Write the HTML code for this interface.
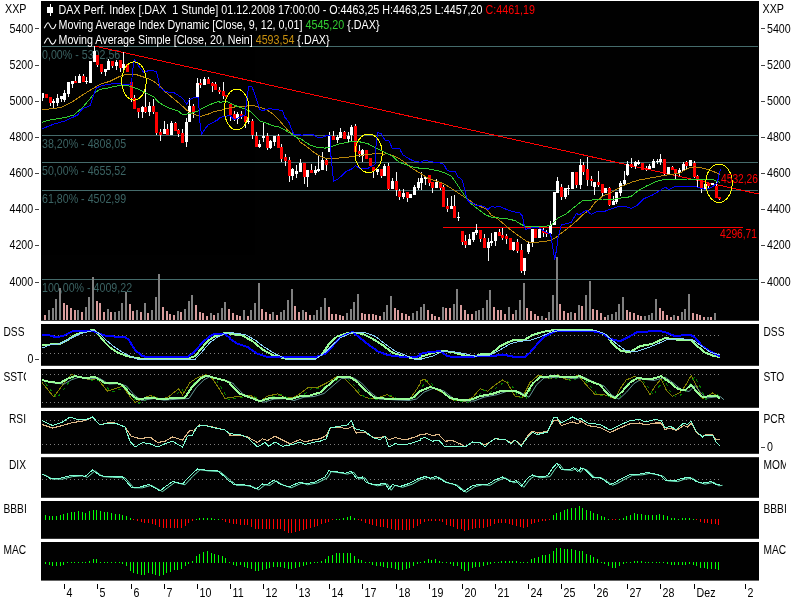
<!DOCTYPE html>
<html><head><meta charset="utf-8"><title>DAX Perf. Index Chart</title>
<style>html,body{margin:0;padding:0;background:#fff;overflow:hidden}svg{display:block;will-change:transform;opacity:.999}text{font-family:"Liberation Sans",Arial,sans-serif;font-size:12.3px}.ax{fill:#000}.lg{fill:#fff}.fib{fill:#3b6363}.rd{fill:#f00}</style></head><body>
<svg width="800" height="600" viewBox="0 0 800 600">
<rect width="800" height="600" fill="#fff"/>
<rect x="41" y="1" width="718" height="319.8" fill="#000"/>
<rect x="41" y="324" width="718" height="41.80000000000001" fill="#000"/>
<rect x="41" y="369" width="718" height="38.80000000000001" fill="#000"/>
<rect x="41" y="411" width="718" height="42.80000000000001" fill="#000"/>
<rect x="41" y="457.2" width="718" height="40.60000000000002" fill="#000"/>
<rect x="41" y="501" width="718" height="37.799999999999955" fill="#000"/>
<rect x="41" y="542" width="718" height="38.60000000000002" fill="#000"/>
<defs><clipPath id="cm"><rect x="42" y="1" width="717" height="319.8"/></clipPath><clipPath id="cl"><rect x="0" y="0" width="25.9" height="600"/></clipPath><clipPath id="cr"><rect x="760" y="0" width="26" height="600"/></clipPath></defs>
<rect x="42" y="46.0" width="716" height="1" fill="#456b6b"/>
<text class="fib" transform="translate(42 58.5) scale(0.868 1)">0,00% - 5302,56</text>
<rect x="42" y="135.0" width="716" height="1" fill="#456b6b"/>
<text class="fib" transform="translate(42 147.5) scale(0.868 1)">38,20% - 4808,05</text>
<rect x="42" y="162.0" width="716" height="1" fill="#456b6b"/>
<text class="fib" transform="translate(42 174.5) scale(0.868 1)">50,00% - 4655,52</text>
<rect x="42" y="190.0" width="716" height="1" fill="#456b6b"/>
<text class="fib" transform="translate(42 202.5) scale(0.868 1)">61,80% - 4502,99</text>
<rect x="42" y="279.0" width="716" height="1" fill="#456b6b"/>
<text class="fib" transform="translate(42 291.5) scale(0.868 1)">100,00% - 4009,22</text>
<g shape-rendering="crispEdges">
<rect x="44" y="315" width="2" height="5" fill="#d89c9c"/>
<rect x="48" y="310" width="2" height="10" fill="#808080"/>
<rect x="52" y="308" width="2" height="12" fill="#808080"/>
<rect x="55" y="299" width="2" height="21" fill="#808080"/>
<rect x="59" y="288" width="2" height="32" fill="#808080"/>
<rect x="63" y="303" width="2" height="17" fill="#d89c9c"/>
<rect x="66" y="305" width="2" height="15" fill="#d89c9c"/>
<rect x="70" y="308" width="2" height="12" fill="#d89c9c"/>
<rect x="74" y="310" width="2" height="10" fill="#d89c9c"/>
<rect x="77" y="310" width="2" height="10" fill="#808080"/>
<rect x="81" y="312" width="2" height="8" fill="#d89c9c"/>
<rect x="85" y="307" width="2" height="13" fill="#808080"/>
<rect x="88" y="297" width="2" height="23" fill="#808080"/>
<rect x="92" y="277" width="2" height="43" fill="#808080"/>
<rect x="96" y="301" width="2" height="19" fill="#d89c9c"/>
<rect x="99" y="303" width="2" height="17" fill="#d89c9c"/>
<rect x="103" y="312" width="2" height="8" fill="#d89c9c"/>
<rect x="107" y="309" width="2" height="11" fill="#808080"/>
<rect x="110" y="312" width="2" height="8" fill="#d89c9c"/>
<rect x="114" y="312" width="2" height="8" fill="#808080"/>
<rect x="118" y="311" width="2" height="9" fill="#808080"/>
<rect x="121" y="303" width="2" height="17" fill="#808080"/>
<rect x="125" y="292" width="2" height="28" fill="#808080"/>
<rect x="129" y="304" width="2" height="16" fill="#d89c9c"/>
<rect x="132" y="311" width="2" height="9" fill="#d89c9c"/>
<rect x="136" y="310" width="2" height="10" fill="#808080"/>
<rect x="140" y="312" width="2" height="8" fill="#d89c9c"/>
<rect x="144" y="303" width="2" height="17" fill="#808080"/>
<rect x="147" y="313" width="2" height="7" fill="#d89c9c"/>
<rect x="151" y="310" width="2" height="10" fill="#808080"/>
<rect x="155" y="297" width="2" height="23" fill="#808080"/>
<rect x="158" y="274" width="2" height="46" fill="#808080"/>
<rect x="162" y="307" width="2" height="13" fill="#d89c9c"/>
<rect x="166" y="311" width="2" height="9" fill="#d89c9c"/>
<rect x="169" y="314" width="2" height="6" fill="#d89c9c"/>
<rect x="173" y="315" width="2" height="5" fill="#d89c9c"/>
<rect x="177" y="311" width="2" height="9" fill="#808080"/>
<rect x="180" y="312" width="2" height="8" fill="#d89c9c"/>
<rect x="184" y="309" width="2" height="11" fill="#808080"/>
<rect x="188" y="301" width="2" height="19" fill="#808080"/>
<rect x="191" y="295" width="2" height="25" fill="#808080"/>
<rect x="195" y="305" width="2" height="15" fill="#d89c9c"/>
<rect x="199" y="312" width="2" height="8" fill="#d89c9c"/>
<rect x="202" y="313" width="2" height="7" fill="#d89c9c"/>
<rect x="206" y="316" width="2" height="4" fill="#d89c9c"/>
<rect x="210" y="313" width="2" height="7" fill="#808080"/>
<rect x="213" y="315" width="2" height="5" fill="#d89c9c"/>
<rect x="217" y="313" width="2" height="7" fill="#808080"/>
<rect x="221" y="308" width="2" height="12" fill="#808080"/>
<rect x="224" y="302" width="2" height="18" fill="#808080"/>
<rect x="228" y="309" width="2" height="11" fill="#d89c9c"/>
<rect x="232" y="313" width="2" height="7" fill="#d89c9c"/>
<rect x="236" y="315" width="2" height="5" fill="#d89c9c"/>
<rect x="239" y="316" width="2" height="4" fill="#d89c9c"/>
<rect x="243" y="310" width="2" height="10" fill="#808080"/>
<rect x="247" y="316" width="2" height="4" fill="#d89c9c"/>
<rect x="250" y="310" width="2" height="10" fill="#808080"/>
<rect x="254" y="303" width="2" height="17" fill="#808080"/>
<rect x="258" y="283" width="2" height="37" fill="#808080"/>
<rect x="261" y="309" width="2" height="11" fill="#d89c9c"/>
<rect x="265" y="312" width="2" height="8" fill="#d89c9c"/>
<rect x="269" y="314" width="2" height="6" fill="#d89c9c"/>
<rect x="272" y="312" width="2" height="8" fill="#808080"/>
<rect x="276" y="315" width="2" height="5" fill="#d89c9c"/>
<rect x="280" y="312" width="2" height="8" fill="#808080"/>
<rect x="283" y="310" width="2" height="10" fill="#808080"/>
<rect x="287" y="300" width="2" height="20" fill="#808080"/>
<rect x="291" y="289" width="2" height="31" fill="#808080"/>
<rect x="294" y="306" width="2" height="14" fill="#d89c9c"/>
<rect x="298" y="312" width="2" height="8" fill="#d89c9c"/>
<rect x="302" y="310" width="2" height="10" fill="#808080"/>
<rect x="305" y="312" width="2" height="8" fill="#d89c9c"/>
<rect x="309" y="315" width="2" height="5" fill="#d89c9c"/>
<rect x="313" y="315" width="2" height="5" fill="#808080"/>
<rect x="316" y="310" width="2" height="10" fill="#808080"/>
<rect x="320" y="307" width="2" height="13" fill="#808080"/>
<rect x="324" y="298" width="2" height="22" fill="#808080"/>
<rect x="328" y="307" width="2" height="13" fill="#d89c9c"/>
<rect x="331" y="314" width="2" height="6" fill="#d89c9c"/>
<rect x="335" y="314" width="2" height="6" fill="#d89c9c"/>
<rect x="339" y="315" width="2" height="5" fill="#d89c9c"/>
<rect x="342" y="316" width="2" height="4" fill="#d89c9c"/>
<rect x="346" y="313" width="2" height="7" fill="#808080"/>
<rect x="350" y="309" width="2" height="11" fill="#808080"/>
<rect x="353" y="302" width="2" height="18" fill="#808080"/>
<rect x="357" y="294" width="2" height="26" fill="#808080"/>
<rect x="361" y="313" width="2" height="7" fill="#d89c9c"/>
<rect x="364" y="314" width="2" height="6" fill="#d89c9c"/>
<rect x="368" y="314" width="2" height="6" fill="#d89c9c"/>
<rect x="372" y="314" width="2" height="6" fill="#d89c9c"/>
<rect x="375" y="315" width="2" height="5" fill="#d89c9c"/>
<rect x="379" y="316" width="2" height="4" fill="#d89c9c"/>
<rect x="383" y="312" width="2" height="8" fill="#808080"/>
<rect x="386" y="305" width="2" height="15" fill="#808080"/>
<rect x="390" y="296" width="2" height="24" fill="#808080"/>
<rect x="394" y="308" width="2" height="12" fill="#d89c9c"/>
<rect x="397" y="310" width="2" height="10" fill="#d89c9c"/>
<rect x="401" y="313" width="2" height="7" fill="#d89c9c"/>
<rect x="405" y="314" width="2" height="6" fill="#d89c9c"/>
<rect x="408" y="316" width="2" height="4" fill="#d89c9c"/>
<rect x="412" y="313" width="2" height="7" fill="#808080"/>
<rect x="416" y="311" width="2" height="9" fill="#808080"/>
<rect x="420" y="307" width="2" height="13" fill="#808080"/>
<rect x="423" y="304" width="2" height="16" fill="#808080"/>
<rect x="427" y="310" width="2" height="10" fill="#d89c9c"/>
<rect x="431" y="314" width="2" height="6" fill="#d89c9c"/>
<rect x="434" y="316" width="2" height="4" fill="#d89c9c"/>
<rect x="438" y="317" width="2" height="3" fill="#d89c9c"/>
<rect x="442" y="307" width="2" height="13" fill="#808080"/>
<rect x="445" y="308" width="2" height="12" fill="#d89c9c"/>
<rect x="449" y="308" width="2" height="12" fill="#d89c9c"/>
<rect x="453" y="304" width="2" height="16" fill="#808080"/>
<rect x="456" y="289" width="2" height="31" fill="#808080"/>
<rect x="460" y="305" width="2" height="15" fill="#d89c9c"/>
<rect x="464" y="310" width="2" height="10" fill="#d89c9c"/>
<rect x="467" y="314" width="2" height="6" fill="#d89c9c"/>
<rect x="471" y="314" width="2" height="6" fill="#d89c9c"/>
<rect x="475" y="311" width="2" height="9" fill="#808080"/>
<rect x="478" y="310" width="2" height="10" fill="#808080"/>
<rect x="482" y="308" width="2" height="12" fill="#808080"/>
<rect x="486" y="300" width="2" height="20" fill="#808080"/>
<rect x="489" y="290" width="2" height="30" fill="#808080"/>
<rect x="493" y="307" width="2" height="13" fill="#d89c9c"/>
<rect x="497" y="310" width="2" height="10" fill="#d89c9c"/>
<rect x="500" y="310" width="2" height="10" fill="#d89c9c"/>
<rect x="504" y="314" width="2" height="6" fill="#d89c9c"/>
<rect x="508" y="307" width="2" height="13" fill="#808080"/>
<rect x="512" y="314" width="2" height="6" fill="#d89c9c"/>
<rect x="515" y="310" width="2" height="10" fill="#808080"/>
<rect x="519" y="300" width="2" height="20" fill="#808080"/>
<rect x="523" y="283" width="2" height="37" fill="#808080"/>
<rect x="526" y="308" width="2" height="12" fill="#d89c9c"/>
<rect x="530" y="311" width="2" height="9" fill="#d89c9c"/>
<rect x="534" y="314" width="2" height="6" fill="#d89c9c"/>
<rect x="537" y="316" width="2" height="4" fill="#d89c9c"/>
<rect x="541" y="316" width="2" height="4" fill="#808080"/>
<rect x="545" y="318" width="2" height="2" fill="#d89c9c"/>
<rect x="548" y="312" width="2" height="8" fill="#808080"/>
<rect x="552" y="295" width="2" height="25" fill="#808080"/>
<rect x="556" y="257" width="2" height="63" fill="#808080"/>
<rect x="559" y="304" width="2" height="16" fill="#d89c9c"/>
<rect x="563" y="311" width="2" height="9" fill="#d89c9c"/>
<rect x="567" y="313" width="2" height="7" fill="#d89c9c"/>
<rect x="570" y="312" width="2" height="8" fill="#808080"/>
<rect x="574" y="313" width="2" height="7" fill="#d89c9c"/>
<rect x="578" y="305" width="2" height="15" fill="#808080"/>
<rect x="581" y="306" width="2" height="14" fill="#d89c9c"/>
<rect x="585" y="295" width="2" height="25" fill="#808080"/>
<rect x="589" y="281" width="2" height="39" fill="#808080"/>
<rect x="592" y="309" width="2" height="11" fill="#d89c9c"/>
<rect x="596" y="310" width="2" height="10" fill="#d89c9c"/>
<rect x="600" y="313" width="2" height="7" fill="#d89c9c"/>
<rect x="604" y="317" width="2" height="3" fill="#d89c9c"/>
<rect x="607" y="315" width="2" height="5" fill="#808080"/>
<rect x="611" y="314" width="2" height="6" fill="#808080"/>
<rect x="615" y="312" width="2" height="8" fill="#808080"/>
<rect x="618" y="304" width="2" height="16" fill="#808080"/>
<rect x="622" y="297" width="2" height="23" fill="#808080"/>
<rect x="626" y="310" width="2" height="10" fill="#d89c9c"/>
<rect x="629" y="312" width="2" height="8" fill="#d89c9c"/>
<rect x="633" y="313" width="2" height="7" fill="#d89c9c"/>
<rect x="637" y="315" width="2" height="5" fill="#d89c9c"/>
<rect x="640" y="316" width="2" height="4" fill="#d89c9c"/>
<rect x="644" y="316" width="2" height="4" fill="#808080"/>
<rect x="648" y="315" width="2" height="5" fill="#808080"/>
<rect x="651" y="313" width="2" height="7" fill="#808080"/>
<rect x="655" y="299" width="2" height="21" fill="#808080"/>
<rect x="659" y="308" width="2" height="12" fill="#d89c9c"/>
<rect x="662" y="311" width="2" height="9" fill="#d89c9c"/>
<rect x="666" y="315" width="2" height="5" fill="#d89c9c"/>
<rect x="670" y="317" width="2" height="3" fill="#d89c9c"/>
<rect x="673" y="315" width="2" height="5" fill="#808080"/>
<rect x="677" y="316" width="2" height="4" fill="#d89c9c"/>
<rect x="681" y="312" width="2" height="8" fill="#808080"/>
<rect x="684" y="309" width="2" height="11" fill="#808080"/>
<rect x="688" y="294" width="2" height="26" fill="#808080"/>
<rect x="692" y="313" width="2" height="7" fill="#d89c9c"/>
<rect x="696" y="314" width="2" height="6" fill="#d89c9c"/>
<rect x="699" y="315" width="2" height="5" fill="#d89c9c"/>
<rect x="703" y="317" width="2" height="3" fill="#d89c9c"/>
<rect x="707" y="317" width="2" height="3" fill="#808080"/>
<rect x="710" y="317" width="2" height="3" fill="#d89c9c"/>
<rect x="714" y="313" width="2" height="7" fill="#808080"/>
</g>
<g clip-path="url(#cm)">
<line x1="94.4" y1="46.0" x2="758.5" y2="194.0" stroke="#f00" stroke-width="1" shape-rendering="crispEdges"/>
<line x1="443" y1="227.5" x2="742.5" y2="227.5" stroke="#f00" stroke-width="1" shape-rendering="crispEdges"/>
<g shape-rendering="crispEdges">
<rect x="42" y="93" width="1" height="8" fill="#f4f4f4"/>
<rect x="41" y="93" width="3" height="5" fill="#fff"/>
<rect x="46" y="94" width="1" height="4" fill="#f4f4f4"/>
<rect x="45" y="94" width="3" height="4" fill="#f00"/>
<rect x="50" y="97" width="1" height="9" fill="#f4f4f4"/>
<rect x="49" y="97" width="3" height="6" fill="#f00"/>
<rect x="53" y="99" width="1" height="9" fill="#f4f4f4"/>
<rect x="52" y="101" width="3" height="2" fill="#fff"/>
<rect x="57" y="94" width="1" height="12" fill="#f4f4f4"/>
<rect x="56" y="98" width="3" height="5" fill="#fff"/>
<rect x="61" y="96" width="1" height="6" fill="#f4f4f4"/>
<rect x="60" y="96" width="3" height="3" fill="#fff"/>
<rect x="64" y="90" width="1" height="12" fill="#f4f4f4"/>
<rect x="63" y="93" width="3" height="7" fill="#fff"/>
<rect x="68" y="82" width="1" height="15" fill="#f4f4f4"/>
<rect x="67" y="82" width="3" height="12" fill="#fff"/>
<rect x="72" y="81" width="1" height="7" fill="#f4f4f4"/>
<rect x="71" y="81" width="3" height="3" fill="#fff"/>
<rect x="75" y="76" width="1" height="7" fill="#f4f4f4"/>
<rect x="74" y="81" width="3" height="2" fill="#f00"/>
<rect x="79" y="74" width="1" height="9" fill="#f4f4f4"/>
<rect x="78" y="76" width="3" height="7" fill="#fff"/>
<rect x="83" y="74" width="1" height="8" fill="#f4f4f4"/>
<rect x="82" y="76" width="3" height="6" fill="#f00"/>
<rect x="86" y="77" width="1" height="7" fill="#f4f4f4"/>
<rect x="85" y="81" width="3" height="1" fill="#fff"/>
<rect x="90" y="61" width="1" height="22" fill="#f4f4f4"/>
<rect x="89" y="61" width="3" height="22" fill="#fff"/>
<rect x="94" y="46" width="1" height="16" fill="#f4f4f4"/>
<rect x="93" y="51" width="3" height="11" fill="#fff"/>
<rect x="97" y="55" width="1" height="12" fill="#f4f4f4"/>
<rect x="96" y="55" width="3" height="10" fill="#f00"/>
<rect x="101" y="64" width="1" height="10" fill="#f4f4f4"/>
<rect x="100" y="64" width="3" height="8" fill="#f00"/>
<rect x="105" y="69" width="1" height="7" fill="#f4f4f4"/>
<rect x="104" y="69" width="3" height="3" fill="#fff"/>
<rect x="108" y="59" width="1" height="11" fill="#f4f4f4"/>
<rect x="107" y="61" width="3" height="9" fill="#fff"/>
<rect x="112" y="61" width="1" height="7" fill="#f4f4f4"/>
<rect x="111" y="61" width="3" height="5" fill="#f00"/>
<rect x="116" y="60" width="1" height="10" fill="#f4f4f4"/>
<rect x="115" y="62" width="3" height="4" fill="#fff"/>
<rect x="120" y="60" width="1" height="12" fill="#f4f4f4"/>
<rect x="119" y="60" width="3" height="8" fill="#f00"/>
<rect x="123" y="52" width="1" height="19" fill="#f4f4f4"/>
<rect x="122" y="64" width="3" height="4" fill="#fff"/>
<rect x="127" y="64" width="1" height="8" fill="#f4f4f4"/>
<rect x="126" y="64" width="3" height="8" fill="#f00"/>
<rect x="131" y="82" width="1" height="20" fill="#f4f4f4"/>
<rect x="130" y="82" width="3" height="16" fill="#f00"/>
<rect x="134" y="95" width="1" height="14" fill="#f4f4f4"/>
<rect x="133" y="98" width="3" height="11" fill="#f00"/>
<rect x="138" y="108" width="1" height="10" fill="#f4f4f4"/>
<rect x="137" y="108" width="3" height="4" fill="#f00"/>
<rect x="142" y="106" width="1" height="12" fill="#f4f4f4"/>
<rect x="141" y="107" width="3" height="5" fill="#fff"/>
<rect x="145" y="88" width="1" height="25" fill="#f4f4f4"/>
<rect x="144" y="107" width="3" height="5" fill="#f00"/>
<rect x="149" y="102" width="1" height="14" fill="#f4f4f4"/>
<rect x="148" y="106" width="3" height="6" fill="#fff"/>
<rect x="153" y="99" width="1" height="15" fill="#f4f4f4"/>
<rect x="152" y="106" width="3" height="6" fill="#f00"/>
<rect x="156" y="112" width="1" height="23" fill="#f4f4f4"/>
<rect x="155" y="112" width="3" height="21" fill="#f00"/>
<rect x="160" y="129" width="1" height="12" fill="#f4f4f4"/>
<rect x="159" y="132" width="3" height="3" fill="#f00"/>
<rect x="164" y="121" width="1" height="13" fill="#f4f4f4"/>
<rect x="163" y="129" width="3" height="5" fill="#fff"/>
<rect x="167" y="124" width="1" height="11" fill="#f4f4f4"/>
<rect x="166" y="129" width="3" height="6" fill="#f00"/>
<rect x="171" y="121" width="1" height="14" fill="#f4f4f4"/>
<rect x="170" y="123" width="3" height="12" fill="#fff"/>
<rect x="175" y="122" width="1" height="9" fill="#f4f4f4"/>
<rect x="174" y="123" width="3" height="8" fill="#f00"/>
<rect x="178" y="129" width="1" height="8" fill="#f4f4f4"/>
<rect x="177" y="130" width="3" height="4" fill="#f00"/>
<rect x="182" y="129" width="1" height="14" fill="#f4f4f4"/>
<rect x="181" y="133" width="3" height="10" fill="#f00"/>
<rect x="186" y="118" width="1" height="29" fill="#f4f4f4"/>
<rect x="185" y="122" width="3" height="20" fill="#fff"/>
<rect x="189" y="98" width="1" height="24" fill="#f4f4f4"/>
<rect x="188" y="106" width="3" height="16" fill="#fff"/>
<rect x="193" y="104" width="1" height="14" fill="#f4f4f4"/>
<rect x="192" y="106" width="3" height="7" fill="#f00"/>
<rect x="197" y="78" width="1" height="20" fill="#f4f4f4"/>
<rect x="196" y="83" width="3" height="15" fill="#fff"/>
<rect x="200" y="79" width="1" height="9" fill="#f4f4f4"/>
<rect x="199" y="83" width="3" height="2" fill="#f00"/>
<rect x="204" y="77" width="1" height="8" fill="#f4f4f4"/>
<rect x="203" y="79" width="3" height="6" fill="#fff"/>
<rect x="208" y="77" width="1" height="7" fill="#f4f4f4"/>
<rect x="207" y="79" width="3" height="5" fill="#f00"/>
<rect x="212" y="82" width="1" height="10" fill="#f4f4f4"/>
<rect x="211" y="83" width="3" height="3" fill="#f00"/>
<rect x="215" y="82" width="1" height="8" fill="#f4f4f4"/>
<rect x="214" y="84" width="3" height="6" fill="#f00"/>
<rect x="219" y="87" width="1" height="7" fill="#f4f4f4"/>
<rect x="218" y="90" width="3" height="2" fill="#f00"/>
<rect x="223" y="82" width="1" height="17" fill="#f4f4f4"/>
<rect x="222" y="91" width="3" height="5" fill="#f00"/>
<rect x="226" y="95" width="1" height="2" fill="#f4f4f4"/>
<rect x="225" y="95" width="3" height="2" fill="#f00"/>
<rect x="230" y="104" width="1" height="17" fill="#f4f4f4"/>
<rect x="229" y="104" width="3" height="11" fill="#f00"/>
<rect x="234" y="111" width="1" height="10" fill="#f4f4f4"/>
<rect x="233" y="114" width="3" height="5" fill="#f00"/>
<rect x="237" y="112" width="1" height="12" fill="#f4f4f4"/>
<rect x="236" y="114" width="3" height="5" fill="#fff"/>
<rect x="241" y="111" width="1" height="8" fill="#f4f4f4"/>
<rect x="240" y="114" width="3" height="3" fill="#f00"/>
<rect x="245" y="116" width="1" height="12" fill="#f4f4f4"/>
<rect x="244" y="116" width="3" height="6" fill="#f00"/>
<rect x="248" y="117" width="1" height="7" fill="#f4f4f4"/>
<rect x="247" y="121" width="3" height="1" fill="#fff"/>
<rect x="252" y="119" width="1" height="20" fill="#f4f4f4"/>
<rect x="251" y="121" width="3" height="14" fill="#f00"/>
<rect x="256" y="132" width="1" height="15" fill="#f4f4f4"/>
<rect x="255" y="136" width="3" height="11" fill="#f00"/>
<rect x="259" y="140" width="1" height="8" fill="#f4f4f4"/>
<rect x="258" y="144" width="3" height="3" fill="#fff"/>
<rect x="263" y="123" width="1" height="19" fill="#f4f4f4"/>
<rect x="262" y="136" width="3" height="2" fill="#fff"/>
<rect x="267" y="133" width="1" height="17" fill="#f4f4f4"/>
<rect x="266" y="136" width="3" height="12" fill="#f00"/>
<rect x="270" y="140" width="1" height="9" fill="#f4f4f4"/>
<rect x="269" y="141" width="3" height="7" fill="#fff"/>
<rect x="274" y="136" width="1" height="10" fill="#f4f4f4"/>
<rect x="273" y="136" width="3" height="6" fill="#fff"/>
<rect x="278" y="134" width="1" height="14" fill="#f4f4f4"/>
<rect x="277" y="136" width="3" height="12" fill="#f00"/>
<rect x="281" y="144" width="1" height="18" fill="#f4f4f4"/>
<rect x="280" y="147" width="3" height="12" fill="#f00"/>
<rect x="285" y="154" width="1" height="12" fill="#f4f4f4"/>
<rect x="284" y="157" width="3" height="4" fill="#f00"/>
<rect x="289" y="157" width="1" height="25" fill="#f4f4f4"/>
<rect x="288" y="160" width="3" height="16" fill="#f00"/>
<rect x="292" y="168" width="1" height="12" fill="#f4f4f4"/>
<rect x="291" y="169" width="3" height="7" fill="#fff"/>
<rect x="296" y="165" width="1" height="13" fill="#f4f4f4"/>
<rect x="295" y="171" width="3" height="3" fill="#fff"/>
<rect x="300" y="159" width="1" height="13" fill="#f4f4f4"/>
<rect x="299" y="163" width="3" height="9" fill="#fff"/>
<rect x="304" y="163" width="1" height="21" fill="#f4f4f4"/>
<rect x="303" y="163" width="3" height="14" fill="#f00"/>
<rect x="307" y="170" width="1" height="17" fill="#f4f4f4"/>
<rect x="306" y="170" width="3" height="7" fill="#fff"/>
<rect x="311" y="164" width="1" height="9" fill="#f4f4f4"/>
<rect x="310" y="170" width="3" height="3" fill="#f00"/>
<rect x="315" y="166" width="1" height="9" fill="#f4f4f4"/>
<rect x="314" y="170" width="3" height="3" fill="#fff"/>
<rect x="318" y="156" width="1" height="16" fill="#f4f4f4"/>
<rect x="317" y="169" width="3" height="2" fill="#fff"/>
<rect x="322" y="152" width="1" height="18" fill="#f4f4f4"/>
<rect x="321" y="160" width="3" height="10" fill="#fff"/>
<rect x="326" y="158" width="1" height="13" fill="#f4f4f4"/>
<rect x="325" y="160" width="3" height="5" fill="#f00"/>
<rect x="329" y="132" width="1" height="20" fill="#f4f4f4"/>
<rect x="328" y="136" width="3" height="16" fill="#fff"/>
<rect x="333" y="131" width="1" height="9" fill="#f4f4f4"/>
<rect x="332" y="136" width="3" height="4" fill="#f00"/>
<rect x="337" y="135" width="1" height="8" fill="#f4f4f4"/>
<rect x="336" y="137" width="3" height="3" fill="#fff"/>
<rect x="340" y="128" width="1" height="10" fill="#f4f4f4"/>
<rect x="339" y="132" width="3" height="6" fill="#fff"/>
<rect x="344" y="131" width="1" height="8" fill="#f4f4f4"/>
<rect x="343" y="132" width="3" height="7" fill="#f00"/>
<rect x="348" y="132" width="1" height="11" fill="#f4f4f4"/>
<rect x="347" y="136" width="3" height="3" fill="#fff"/>
<rect x="351" y="125" width="1" height="16" fill="#f4f4f4"/>
<rect x="350" y="127" width="3" height="8" fill="#fff"/>
<rect x="355" y="124" width="1" height="28" fill="#f4f4f4"/>
<rect x="354" y="126" width="3" height="26" fill="#f00"/>
<rect x="359" y="145" width="1" height="12" fill="#f4f4f4"/>
<rect x="358" y="151" width="3" height="3" fill="#f00"/>
<rect x="362" y="149" width="1" height="13" fill="#f4f4f4"/>
<rect x="361" y="150" width="3" height="6" fill="#fff"/>
<rect x="366" y="150" width="1" height="9" fill="#f4f4f4"/>
<rect x="365" y="150" width="3" height="9" fill="#f00"/>
<rect x="370" y="158" width="1" height="8" fill="#f4f4f4"/>
<rect x="369" y="158" width="3" height="8" fill="#f00"/>
<rect x="373" y="167" width="1" height="11" fill="#f4f4f4"/>
<rect x="372" y="167" width="3" height="4" fill="#f00"/>
<rect x="377" y="169" width="1" height="6" fill="#f4f4f4"/>
<rect x="376" y="169" width="3" height="3" fill="#fff"/>
<rect x="381" y="169" width="1" height="9" fill="#f4f4f4"/>
<rect x="380" y="169" width="3" height="7" fill="#f00"/>
<rect x="384" y="164" width="1" height="12" fill="#f4f4f4"/>
<rect x="383" y="166" width="3" height="10" fill="#fff"/>
<rect x="388" y="163" width="1" height="27" fill="#f4f4f4"/>
<rect x="387" y="166" width="3" height="23" fill="#f00"/>
<rect x="392" y="178" width="1" height="11" fill="#f4f4f4"/>
<rect x="391" y="181" width="3" height="8" fill="#fff"/>
<rect x="396" y="172" width="1" height="24" fill="#f4f4f4"/>
<rect x="395" y="181" width="3" height="9" fill="#f00"/>
<rect x="399" y="189" width="1" height="11" fill="#f4f4f4"/>
<rect x="398" y="191" width="3" height="6" fill="#f00"/>
<rect x="403" y="189" width="1" height="10" fill="#f4f4f4"/>
<rect x="402" y="193" width="3" height="4" fill="#fff"/>
<rect x="407" y="192" width="1" height="10" fill="#f4f4f4"/>
<rect x="406" y="192" width="3" height="6" fill="#f00"/>
<rect x="410" y="194" width="1" height="4" fill="#f4f4f4"/>
<rect x="409" y="194" width="3" height="4" fill="#fff"/>
<rect x="414" y="185" width="1" height="10" fill="#f4f4f4"/>
<rect x="413" y="187" width="3" height="8" fill="#fff"/>
<rect x="418" y="178" width="1" height="12" fill="#f4f4f4"/>
<rect x="417" y="182" width="3" height="6" fill="#fff"/>
<rect x="421" y="172" width="1" height="18" fill="#f4f4f4"/>
<rect x="420" y="178" width="3" height="5" fill="#fff"/>
<rect x="425" y="176" width="1" height="9" fill="#f4f4f4"/>
<rect x="424" y="177" width="3" height="2" fill="#fff"/>
<rect x="429" y="175" width="1" height="11" fill="#f4f4f4"/>
<rect x="428" y="175" width="3" height="8" fill="#f00"/>
<rect x="432" y="182" width="1" height="11" fill="#f4f4f4"/>
<rect x="431" y="182" width="3" height="6" fill="#f00"/>
<rect x="436" y="179" width="1" height="9" fill="#f4f4f4"/>
<rect x="435" y="182" width="3" height="6" fill="#fff"/>
<rect x="440" y="183" width="1" height="7" fill="#f4f4f4"/>
<rect x="439" y="183" width="3" height="5" fill="#f00"/>
<rect x="443" y="185" width="1" height="22" fill="#f4f4f4"/>
<rect x="442" y="187" width="3" height="20" fill="#f00"/>
<rect x="447" y="198" width="1" height="14" fill="#f4f4f4"/>
<rect x="446" y="206" width="3" height="3" fill="#f00"/>
<rect x="451" y="196" width="1" height="13" fill="#f4f4f4"/>
<rect x="450" y="206" width="3" height="3" fill="#fff"/>
<rect x="454" y="195" width="1" height="23" fill="#f4f4f4"/>
<rect x="453" y="206" width="3" height="12" fill="#f00"/>
<rect x="458" y="212" width="1" height="9" fill="#f4f4f4"/>
<rect x="457" y="217" width="3" height="1" fill="#fff"/>
<rect x="462" y="231" width="1" height="14" fill="#f4f4f4"/>
<rect x="461" y="231" width="3" height="11" fill="#f00"/>
<rect x="465" y="235" width="1" height="13" fill="#f4f4f4"/>
<rect x="464" y="241" width="3" height="4" fill="#f00"/>
<rect x="469" y="234" width="1" height="11" fill="#f4f4f4"/>
<rect x="468" y="239" width="3" height="6" fill="#fff"/>
<rect x="473" y="232" width="1" height="10" fill="#f4f4f4"/>
<rect x="472" y="232" width="3" height="8" fill="#fff"/>
<rect x="476" y="224" width="1" height="11" fill="#f4f4f4"/>
<rect x="475" y="230" width="3" height="3" fill="#fff"/>
<rect x="480" y="230" width="1" height="12" fill="#f4f4f4"/>
<rect x="479" y="230" width="3" height="9" fill="#f00"/>
<rect x="484" y="234" width="1" height="14" fill="#f4f4f4"/>
<rect x="483" y="238" width="3" height="10" fill="#f00"/>
<rect x="488" y="238" width="1" height="23" fill="#f4f4f4"/>
<rect x="487" y="242" width="3" height="6" fill="#fff"/>
<rect x="491" y="233" width="1" height="13" fill="#f4f4f4"/>
<rect x="490" y="241" width="3" height="2" fill="#fff"/>
<rect x="495" y="232" width="1" height="14" fill="#f4f4f4"/>
<rect x="494" y="232" width="3" height="9" fill="#fff"/>
<rect x="499" y="229" width="1" height="7" fill="#f4f4f4"/>
<rect x="498" y="232" width="3" height="4" fill="#f00"/>
<rect x="502" y="228" width="1" height="12" fill="#f4f4f4"/>
<rect x="501" y="235" width="3" height="3" fill="#f00"/>
<rect x="506" y="234" width="1" height="10" fill="#f4f4f4"/>
<rect x="505" y="236" width="3" height="3" fill="#f00"/>
<rect x="510" y="238" width="1" height="12" fill="#f4f4f4"/>
<rect x="509" y="238" width="3" height="12" fill="#f00"/>
<rect x="513" y="242" width="1" height="9" fill="#f4f4f4"/>
<rect x="512" y="242" width="3" height="8" fill="#fff"/>
<rect x="517" y="239" width="1" height="14" fill="#f4f4f4"/>
<rect x="516" y="242" width="3" height="9" fill="#f00"/>
<rect x="521" y="244" width="1" height="29" fill="#f4f4f4"/>
<rect x="520" y="250" width="3" height="21" fill="#f00"/>
<rect x="524" y="258" width="1" height="17" fill="#f4f4f4"/>
<rect x="523" y="258" width="3" height="13" fill="#fff"/>
<rect x="528" y="242" width="1" height="12" fill="#f4f4f4"/>
<rect x="527" y="244" width="3" height="8" fill="#fff"/>
<rect x="532" y="229" width="1" height="18" fill="#f4f4f4"/>
<rect x="531" y="229" width="3" height="14" fill="#fff"/>
<rect x="535" y="229" width="1" height="9" fill="#f4f4f4"/>
<rect x="534" y="229" width="3" height="9" fill="#f00"/>
<rect x="539" y="229" width="1" height="9" fill="#f4f4f4"/>
<rect x="538" y="229" width="3" height="9" fill="#fff"/>
<rect x="543" y="228" width="1" height="9" fill="#f4f4f4"/>
<rect x="542" y="231" width="3" height="2" fill="#f00"/>
<rect x="546" y="230" width="1" height="7" fill="#f4f4f4"/>
<rect x="545" y="232" width="3" height="2" fill="#f00"/>
<rect x="550" y="221" width="1" height="13" fill="#f4f4f4"/>
<rect x="549" y="225" width="3" height="9" fill="#fff"/>
<rect x="554" y="192" width="1" height="33" fill="#f4f4f4"/>
<rect x="553" y="192" width="3" height="33" fill="#fff"/>
<rect x="557" y="177" width="1" height="16" fill="#f4f4f4"/>
<rect x="556" y="181" width="3" height="12" fill="#fff"/>
<rect x="561" y="184" width="1" height="16" fill="#f4f4f4"/>
<rect x="560" y="187" width="3" height="10" fill="#f00"/>
<rect x="565" y="188" width="1" height="11" fill="#f4f4f4"/>
<rect x="564" y="188" width="3" height="9" fill="#fff"/>
<rect x="568" y="185" width="1" height="10" fill="#f4f4f4"/>
<rect x="567" y="188" width="3" height="1" fill="#fff"/>
<rect x="572" y="172" width="1" height="17" fill="#f4f4f4"/>
<rect x="571" y="172" width="3" height="17" fill="#fff"/>
<rect x="576" y="172" width="1" height="16" fill="#f4f4f4"/>
<rect x="575" y="172" width="3" height="13" fill="#f00"/>
<rect x="580" y="159" width="1" height="30" fill="#f4f4f4"/>
<rect x="579" y="165" width="3" height="20" fill="#fff"/>
<rect x="583" y="162" width="1" height="13" fill="#f4f4f4"/>
<rect x="582" y="165" width="3" height="7" fill="#f00"/>
<rect x="587" y="157" width="1" height="29" fill="#f4f4f4"/>
<rect x="586" y="169" width="3" height="11" fill="#f00"/>
<rect x="591" y="176" width="1" height="10" fill="#f4f4f4"/>
<rect x="590" y="179" width="3" height="2" fill="#f00"/>
<rect x="594" y="182" width="1" height="13" fill="#f4f4f4"/>
<rect x="593" y="182" width="3" height="5" fill="#fff"/>
<rect x="598" y="171" width="1" height="16" fill="#f4f4f4"/>
<rect x="597" y="182" width="3" height="3" fill="#f00"/>
<rect x="602" y="184" width="1" height="13" fill="#f4f4f4"/>
<rect x="601" y="184" width="3" height="9" fill="#f00"/>
<rect x="605" y="188" width="1" height="5" fill="#f4f4f4"/>
<rect x="604" y="188" width="3" height="5" fill="#fff"/>
<rect x="609" y="187" width="1" height="19" fill="#f4f4f4"/>
<rect x="608" y="188" width="3" height="17" fill="#f00"/>
<rect x="613" y="196" width="1" height="9" fill="#f4f4f4"/>
<rect x="612" y="201" width="3" height="4" fill="#fff"/>
<rect x="616" y="192" width="1" height="12" fill="#f4f4f4"/>
<rect x="615" y="192" width="3" height="10" fill="#fff"/>
<rect x="620" y="181" width="1" height="15" fill="#f4f4f4"/>
<rect x="619" y="183" width="3" height="10" fill="#fff"/>
<rect x="624" y="171" width="1" height="14" fill="#f4f4f4"/>
<rect x="623" y="180" width="3" height="4" fill="#fff"/>
<rect x="627" y="161" width="1" height="15" fill="#f4f4f4"/>
<rect x="626" y="164" width="3" height="11" fill="#fff"/>
<rect x="631" y="158" width="1" height="10" fill="#f4f4f4"/>
<rect x="630" y="164" width="3" height="3" fill="#f00"/>
<rect x="635" y="161" width="1" height="8" fill="#f4f4f4"/>
<rect x="634" y="162" width="3" height="4" fill="#fff"/>
<rect x="638" y="160" width="1" height="5" fill="#f4f4f4"/>
<rect x="637" y="162" width="3" height="2" fill="#fff"/>
<rect x="642" y="163" width="1" height="7" fill="#f4f4f4"/>
<rect x="641" y="163" width="3" height="7" fill="#f00"/>
<rect x="646" y="166" width="1" height="5" fill="#f4f4f4"/>
<rect x="645" y="168" width="3" height="2" fill="#f00"/>
<rect x="649" y="164" width="1" height="5" fill="#f4f4f4"/>
<rect x="648" y="166" width="3" height="3" fill="#fff"/>
<rect x="653" y="159" width="1" height="9" fill="#f4f4f4"/>
<rect x="652" y="161" width="3" height="7" fill="#fff"/>
<rect x="657" y="159" width="1" height="5" fill="#f4f4f4"/>
<rect x="656" y="161" width="3" height="1" fill="#fff"/>
<rect x="660" y="154" width="1" height="11" fill="#f4f4f4"/>
<rect x="659" y="159" width="3" height="3" fill="#fff"/>
<rect x="664" y="159" width="1" height="16" fill="#f4f4f4"/>
<rect x="663" y="159" width="3" height="15" fill="#f00"/>
<rect x="668" y="167" width="1" height="7" fill="#f4f4f4"/>
<rect x="667" y="167" width="3" height="7" fill="#fff"/>
<rect x="672" y="166" width="1" height="4" fill="#f4f4f4"/>
<rect x="671" y="167" width="3" height="3" fill="#f00"/>
<rect x="675" y="169" width="1" height="10" fill="#f4f4f4"/>
<rect x="674" y="169" width="3" height="5" fill="#f00"/>
<rect x="679" y="168" width="1" height="8" fill="#f4f4f4"/>
<rect x="678" y="170" width="3" height="3" fill="#fff"/>
<rect x="683" y="162" width="1" height="9" fill="#f4f4f4"/>
<rect x="682" y="164" width="3" height="7" fill="#fff"/>
<rect x="686" y="161" width="1" height="8" fill="#f4f4f4"/>
<rect x="685" y="162" width="3" height="4" fill="#f00"/>
<rect x="690" y="160" width="1" height="6" fill="#f4f4f4"/>
<rect x="689" y="160" width="3" height="6" fill="#fff"/>
<rect x="694" y="161" width="1" height="17" fill="#f4f4f4"/>
<rect x="693" y="163" width="3" height="14" fill="#f00"/>
<rect x="697" y="175" width="1" height="12" fill="#f4f4f4"/>
<rect x="696" y="176" width="3" height="4" fill="#f00"/>
<rect x="701" y="180" width="1" height="13" fill="#f4f4f4"/>
<rect x="700" y="180" width="3" height="8" fill="#f00"/>
<rect x="705" y="184" width="1" height="5" fill="#f4f4f4"/>
<rect x="704" y="184" width="3" height="5" fill="#fff"/>
<rect x="708" y="183" width="1" height="5" fill="#f4f4f4"/>
<rect x="707" y="183" width="3" height="3" fill="#f00"/>
<rect x="712" y="183" width="1" height="2" fill="#f4f4f4"/>
<rect x="711" y="183" width="3" height="2" fill="#fff"/>
<rect x="716" y="182" width="1" height="16" fill="#f4f4f4"/>
<rect x="715" y="186" width="3" height="12" fill="#f00"/>
<rect x="719" y="197" width="1" height="3" fill="#f4f4f4"/>
<rect x="718" y="197" width="3" height="2" fill="#f00"/>
</g>
<polyline points="41.2,109.4 52.5,108.8 62.5,106.9 71.2,102.5 82.5,95.0 92.5,88.8 100.0,84.4 110.0,81.2 120.0,76.2 127.5,74.0 136.2,74.0 137.5,75.0 145.0,77.5 152.5,80.6 160.0,86.2 166.2,92.5 173.8,98.8 182.5,106.2 188.8,111.9 195.0,114.8 201.2,116.2 207.5,114.4 215.0,111.2 217.5,110.9 220.0,110.6 225.0,109.0 232.5,107.2 240.0,106.5 247.5,106.0 253.8,105.6 260.0,107.5 266.2,109.4 272.5,113.8 280.0,121.2 287.5,130.0 295.0,136.2 298.8,140.0 300.0,141.9 306.2,146.2 312.5,151.2 318.8,155.6 325.0,158.1 332.5,158.8 341.2,157.8 350.0,156.9 357.5,155.6 365.0,154.8 372.5,154.0 380.0,153.8 385.0,154.1 385.0,153.1 391.2,155.0 397.5,157.5 405.0,162.5 412.5,168.5 420.0,173.1 427.5,178.1 435.0,180.6 442.5,183.1 450.0,187.5 457.5,192.5 465.0,197.5 470.0,200.6 473.8,203.8 481.2,206.9 486.2,208.8 491.2,215.0 497.5,218.8 505.0,225.0 510.0,229.4 517.5,235.0 523.8,239.4 527.5,241.9 535.0,242.5 542.5,241.5 550.0,240.6 555.0,238.1 571.9,225.0 576.2,221.2 582.5,215.0 590.0,209.4 595.0,202.5 602.5,196.2 610.0,193.1 617.5,188.8 622.5,185.6 625.0,185.0 632.5,181.9 640.0,179.8 650.0,178.1 660.0,176.2 667.5,175.0 675.0,173.8 680.0,173.1 685.0,170.0 690.0,167.5 695.0,166.9 700.0,167.5 707.5,169.4 715.0,172.2 720.0,174.4" fill="none" stroke="#b8860b" stroke-width="1" stroke-linejoin="round" shape-rendering="crispEdges" />
<polyline points="41.2,122.5 50.0,120.0 65.0,117.5 73.8,115.0 82.5,107.5 90.0,98.8 95.0,92.5 100.0,89.4 107.5,88.1 115.0,86.2 125.0,85.2 130.0,86.2 137.5,88.8 145.0,92.5 153.8,96.9 157.5,101.2 163.8,105.6 171.2,108.8 177.5,110.6 182.5,114.4 190.0,113.8 197.5,111.2 205.0,106.9 215.0,102.5 218.8,101.6 220.0,102.5 226.2,101.2 232.5,104.4 238.8,106.9 245.0,109.0 250.0,111.2 255.0,116.2 260.0,121.2 266.2,123.1 272.5,125.6 278.8,126.9 285.0,130.0 291.2,133.8 297.5,138.1 300.0,138.1 305.0,141.9 310.0,145.0 316.2,147.2 325.0,148.1 330.0,147.2 337.5,144.4 345.0,142.8 352.5,141.2 360.0,141.9 367.5,143.5 373.8,146.9 380.0,150.0 383.8,151.9 385.0,152.5 392.5,156.2 398.8,161.9 405.0,164.4 412.5,166.9 421.2,168.5 428.8,169.0 437.5,170.6 445.0,173.1 451.2,176.2 455.0,181.2 460.0,188.8 465.0,196.2 470.0,203.1 471.2,203.8 477.5,208.8 485.0,214.4 491.2,217.2 497.5,217.9 507.5,218.8 515.0,220.6 521.2,224.4 525.0,226.2 535.0,226.5 542.5,226.5 550.0,225.6 552.5,224.4 552.5,223.8 558.8,217.5 566.2,213.8 573.8,207.5 582.5,200.6 592.5,200.0 602.5,199.0 612.5,199.4 620.0,198.1 623.8,197.8 625.0,198.1 631.2,196.2 637.5,191.2 646.2,186.2 655.0,181.9 660.0,180.2 667.5,179.4 677.5,179.4 687.5,179.0 700.0,179.0 712.5,179.4 720.0,182.5" fill="none" stroke="#32cd32" stroke-width="1" stroke-linejoin="round" shape-rendering="crispEdges" />
<polyline points="41.5,129.0 54.0,124.0 65.0,121.0 72.5,117.5 77.5,115.0 82.5,108.8 90.0,105.6 93.8,95.0 96.2,88.1 100.0,86.2 107.5,84.4 115.0,83.5 120.0,83.8 127.5,85.0 131.5,84.4 132.5,71.2 134.4,59.0 136.9,63.1 140.0,68.0 144.0,72.5 150.0,70.0 156.5,71.5 158.5,80.0 160.0,87.5 166.2,91.9 173.8,92.5 182.5,98.1 186.9,104.4 188.8,100.0 193.8,97.5 198.1,97.5 198.8,105.0 200.0,122.5 201.5,134.4 205.0,128.8 208.1,125.0 217.5,120.0 220.0,117.5 225.0,116.2 230.0,115.6 234.4,120.0 238.8,117.5 245.0,115.0 246.9,98.8 248.8,86.2 251.9,86.9 253.8,91.2 257.5,102.5 260.0,109.4 263.1,111.2 265.0,109.4 270.0,108.8 276.2,109.4 282.5,110.6 285.0,117.5 288.8,121.9 291.9,130.0 293.8,134.4 300.0,134.4 300.0,135.2 306.2,134.8 313.1,134.8 317.5,137.2 322.5,137.2 326.9,135.4 330.0,135.6 330.6,152.5 331.9,165.0 333.5,181.2 337.5,179.4 342.5,175.0 346.2,171.2 351.2,169.4 355.6,165.6 358.8,168.1 362.5,168.8 367.5,168.5 371.9,166.2 375.0,164.4 376.0,146.2 377.5,132.5 381.2,133.8 385.0,140.0 388.8,140.6 392.5,148.8 400.0,149.0 400.0,150.0 403.1,155.0 410.0,159.4 415.0,161.5 421.2,162.2 425.0,160.0 431.2,161.9 438.8,162.5 443.8,164.4 446.9,170.0 450.0,171.5 455.0,171.5 458.1,176.9 461.9,179.4 463.8,186.2 465.6,193.8 467.5,200.0 470.0,202.5 475.0,203.8 475.0,205.0 483.8,206.2 488.1,209.4 491.9,206.0 495.0,207.5 498.8,206.0 505.0,208.8 511.2,211.2 520.0,213.1 522.5,216.2 523.8,223.8 525.6,229.4 530.0,228.1 537.5,227.2 542.5,230.0 547.5,232.8 550.6,233.8 551.9,242.5 553.8,253.8 554.6,260.0 556.5,250.0 558.0,238.0 561.2,225.0 561.2,225.0 571.2,222.5 576.2,213.8 580.0,214.4 586.2,210.0 591.2,214.4 596.2,211.9 605.0,211.2 611.2,208.8 617.5,206.9 625.0,206.2 625.0,206.2 631.2,208.5 637.5,205.0 643.8,198.8 652.5,195.0 660.0,190.6 665.0,187.2 668.8,189.4 675.0,186.5 685.0,186.5 695.0,186.5 700.0,188.1 706.2,189.4 712.5,186.9 717.5,182.5 718.8,175.0 720.6,169.4" fill="none" stroke="#0000ff" stroke-width="1" stroke-linejoin="round" shape-rendering="crispEdges" />
<ellipse cx="134" cy="81" rx="12.2" ry="19.2" fill="none" stroke="#ff0" stroke-width="1" shape-rendering="crispEdges"/>
<ellipse cx="236.7" cy="109.4" rx="12.3" ry="20.4" fill="none" stroke="#ff0" stroke-width="1" shape-rendering="crispEdges"/>
<ellipse cx="368.6" cy="153.25" rx="13.6" ry="19.25" fill="none" stroke="#ff0" stroke-width="1" shape-rendering="crispEdges"/>
<ellipse cx="719" cy="183.2" rx="13.2" ry="19.2" fill="none" stroke="#ff0" stroke-width="1" shape-rendering="crispEdges"/>
</g>
<text class="rd" x="721" y="183" textLength="37" lengthAdjust="spacingAndGlyphs">4532,26</text>
<text class="rd" x="720" y="237.8" textLength="37" lengthAdjust="spacingAndGlyphs">4296,71</text>
<g shape-rendering="crispEdges"><rect x="50" y="4" width="1" height="12" fill="#fff"/><rect x="47" y="7" width="6" height="6" fill="#fff"/></g>
<path d="M44.3 28.3 C45.5 25.8,47 22.700000000000003,48.2 22.700000000000003 S50.5 28.8,52.6 28.8 S55 26.3,56 24.1" fill="none" stroke="#fff" stroke-width="1.1"/>
<path d="M44.3 43.6 C45.5 41.1,47 38.0,48.2 38.0 S50.5 44.1,52.6 44.1 S55 41.6,56 39.4" fill="none" stroke="#fff" stroke-width="1.1"/>
<text class="lg" x="58.5" y="13.5" textLength="476.5" lengthAdjust="spacingAndGlyphs"><tspan>DAX Perf. Index [.DAX&#160; 1 Stunde] 01.12.2008 17:00:00 - O:4463,25 H:4463,25 L:4457,20 </tspan><tspan fill="#f00">C:4461,19</tspan></text>
<text class="lg" x="58.5" y="29" textLength="321" lengthAdjust="spacingAndGlyphs"><tspan>Moving Average Index Dynamic [Close, 9, 12, 0,01] </tspan><tspan fill="#32cd32">4545,20</tspan><tspan> {.DAX}</tspan></text>
<text class="lg" x="58.5" y="44" textLength="271" lengthAdjust="spacingAndGlyphs"><tspan>Moving Average Simple [Close, 20, Nein] </tspan><tspan fill="#c8900f">4593,54</tspan><tspan> {.DAX}</tspan></text>
<text class="ax" transform="translate(9.5 32.5) scale(0.868 1)">5400</text><rect x="35" y="28" width="4" height="1" fill="#444"/>
<text class="ax" transform="translate(767 32.5) scale(0.868 1)">5400</text><rect x="761" y="28" width="4" height="1" fill="#444"/>
<text class="ax" transform="translate(9.5 68.7) scale(0.868 1)">5200</text><rect x="35" y="65" width="4" height="1" fill="#444"/>
<text class="ax" transform="translate(767 68.7) scale(0.868 1)">5200</text><rect x="761" y="65" width="4" height="1" fill="#444"/>
<text class="ax" transform="translate(9.5 104.8) scale(0.868 1)">5000</text><rect x="35" y="101" width="4" height="1" fill="#444"/>
<text class="ax" transform="translate(767 104.8) scale(0.868 1)">5000</text><rect x="761" y="101" width="4" height="1" fill="#444"/>
<text class="ax" transform="translate(9.5 140.9) scale(0.868 1)">4800</text><rect x="35" y="137" width="4" height="1" fill="#444"/>
<text class="ax" transform="translate(767 140.9) scale(0.868 1)">4800</text><rect x="761" y="137" width="4" height="1" fill="#444"/>
<text class="ax" transform="translate(9.5 177.1) scale(0.868 1)">4600</text><rect x="35" y="173" width="4" height="1" fill="#444"/>
<text class="ax" transform="translate(767 177.1) scale(0.868 1)">4600</text><rect x="761" y="173" width="4" height="1" fill="#444"/>
<text class="ax" transform="translate(9.5 213.2) scale(0.868 1)">4400</text><rect x="35" y="209" width="4" height="1" fill="#444"/>
<text class="ax" transform="translate(767 213.2) scale(0.868 1)">4400</text><rect x="761" y="209" width="4" height="1" fill="#444"/>
<text class="ax" transform="translate(9.5 249.4) scale(0.868 1)">4200</text><rect x="35" y="245" width="4" height="1" fill="#444"/>
<text class="ax" transform="translate(767 249.4) scale(0.868 1)">4200</text><rect x="761" y="245" width="4" height="1" fill="#444"/>
<text class="ax" transform="translate(9.5 285.5) scale(0.868 1)">4000</text><rect x="35" y="282" width="4" height="1" fill="#444"/>
<text class="ax" transform="translate(767 285.5) scale(0.868 1)">4000</text><rect x="761" y="282" width="4" height="1" fill="#444"/>
<text class="ax" x="5" y="12.5" textLength="21.5" lengthAdjust="spacingAndGlyphs">XXP</text>
<text class="ax" x="762.5" y="12.5" textLength="21.5" lengthAdjust="spacingAndGlyphs">XXP</text>
<g clip-path="url(#cl)">
<text class="ax" transform="translate(3.5 335.5) scale(0.83 1)">DSS</text>
<text class="ax" transform="translate(3.5 380.5) scale(0.83 1)">SSTO</text>
<text class="ax" transform="translate(9 422.5) scale(0.83 1)">RSI</text>
<text class="ax" transform="translate(9 468.5) scale(0.83 1)">DIX</text>
<text class="ax" transform="translate(3.5 512.5) scale(0.83 1)">BBBI</text>
<text class="ax" transform="translate(3.5 553.5) scale(0.83 1)">MAC</text>
</g>
<g clip-path="url(#cr)">
<text class="ax" transform="translate(763.5 335.5) scale(0.83 1)">DSS</text>
<text class="ax" transform="translate(763.5 380.5) scale(0.83 1)">STO</text>
<text class="ax" transform="translate(763.5 422.5) scale(0.83 1)">PCR</text>
<text class="ax" transform="translate(763.5 468.5) scale(0.83 1)">MOM</text>
<text class="ax" transform="translate(763.5 512.5) scale(0.83 1)">BBBI</text>
<text class="ax" transform="translate(763.5 553.5) scale(0.83 1)">MAC</text>
</g>
<text class="ax" transform="translate(27.5 363) scale(0.868 1)">0</text><rect x="35" y="359" width="4" height="1" fill="#444"/>
<text class="ax" transform="translate(767 451) scale(0.868 1)">0</text><rect x="761" y="447" width="4" height="1" fill="#444"/>
<line x1="42" y1="335.5" x2="720" y2="335.5" stroke="#808080" stroke-width="1" stroke-dasharray="1 3" shape-rendering="crispEdges"/>
<line x1="42" y1="353.5" x2="720" y2="353.5" stroke="#808080" stroke-width="1" stroke-dasharray="1 3" shape-rendering="crispEdges"/>
<line x1="42" y1="374.5" x2="720" y2="374.5" stroke="#808080" stroke-width="1" stroke-dasharray="1 3" shape-rendering="crispEdges"/>
<line x1="42" y1="402.5" x2="720" y2="402.5" stroke="#808080" stroke-width="1" stroke-dasharray="1 3" shape-rendering="crispEdges"/>
<line x1="42" y1="420.5" x2="720" y2="420.5" stroke="#808080" stroke-width="1" stroke-dasharray="1 3" shape-rendering="crispEdges"/>
<line x1="42" y1="444.5" x2="720" y2="444.5" stroke="#808080" stroke-width="1" stroke-dasharray="1 3" shape-rendering="crispEdges"/>
<line x1="42" y1="479.5" x2="720" y2="479.5" stroke="#808080" stroke-width="1" stroke-dasharray="1 3" shape-rendering="crispEdges"/>
<polyline points="42.0,345.0 50.0,344.5 60.0,343.8 67.5,340.0 75.0,335.0 83.8,332.0 93.8,329.8 98.8,335.0 103.8,341.2 110.0,347.5 117.5,352.5 127.5,356.2 140.0,358.6 187.5,358.6 195.0,356.2 201.2,348.8 207.5,341.2 215.0,336.2 226.2,332.5 230.0,333.5 230.0,333.8 242.5,335.5 252.5,341.2 262.5,349.5 272.5,355.0 285.0,358.6 315.0,358.6 322.5,353.8 330.0,342.5 337.5,336.2 350.0,332.5 362.5,333.8 372.5,338.8 382.5,345.0 392.5,352.5 402.5,356.2 415.0,358.6 420.0,358.6 420.0,357.0 430.0,353.8 442.5,350.8 452.5,352.0 462.5,355.0 472.5,357.0 480.0,354.5 491.2,353.8 500.0,346.2 507.5,342.5 515.0,339.5 525.0,339.5 532.5,335.0 542.5,332.0 555.0,329.8 580.0,329.8 580.0,329.8 590.0,329.8 600.0,332.5 607.5,336.2 612.5,343.8 621.2,351.2 630.0,352.0 640.0,346.2 652.5,343.8 665.0,338.0 680.0,340.0 691.2,340.0 697.5,346.2 705.0,352.5 712.5,355.5 720.0,357.0" fill="none" stroke="#98fb98" stroke-width="2.0" stroke-linejoin="round" shape-rendering="crispEdges" />
<polyline points="42.0,334.5 50.0,335.5 55.0,337.0 62.5,336.2 72.5,331.3 82.5,331.3 93.8,331.3 100.0,333.8 107.5,336.2 125.0,337.0 128.8,340.0 135.0,350.0 142.5,356.2 150.0,357.3 187.5,357.3 195.0,351.2 202.5,342.5 210.0,336.2 215.0,333.8 225.0,334.5 230.0,338.0 230.0,338.8 237.5,343.8 247.5,347.0 257.5,353.8 267.5,357.0 285.0,357.3 315.0,357.3 325.0,353.8 332.5,346.2 340.0,337.5 352.5,331.8 360.0,338.0 367.5,343.8 377.5,351.2 387.5,355.0 405.0,357.3 415.0,357.3 420.0,355.8 420.0,353.8 430.0,352.0 440.0,351.2 447.5,356.2 457.5,357.3 470.0,357.3 477.5,356.2 492.5,356.2 502.5,354.5 515.0,357.0 525.0,357.3 530.0,352.5 537.5,343.8 545.0,336.2 555.0,331.3 570.0,331.3 580.0,331.3 580.0,331.3 592.5,331.3 602.5,333.0 610.0,338.8 620.0,341.2 627.5,337.5 637.5,332.0 652.5,331.3 661.2,331.3 667.5,333.0 675.0,336.2 690.0,334.5 695.0,337.5 702.5,346.2 710.0,351.2 720.0,356.2" fill="none" stroke="#0000ff" stroke-width="2.0" stroke-linejoin="round" shape-rendering="crispEdges" />
<polyline points="42.0,348.0 50.0,345.0 60.0,343.8 70.0,338.8 80.0,333.8 93.8,330.3 100.0,333.8 107.5,341.2 115.0,347.5 125.0,353.8 137.5,359.4 152.5,359.4 187.5,359.4 195.0,359.4 202.5,351.2 210.0,342.5 217.5,337.0 226.2,333.0 230.0,333.5 230.0,332.5 245.0,334.5 255.0,340.0 265.0,347.5 275.0,353.8 287.5,359.4 315.0,359.4 325.0,352.5 332.5,345.0 340.0,338.0 352.5,332.5 365.0,332.5 375.0,336.2 385.0,343.8 395.0,351.2 405.0,355.0 415.0,359.4 420.0,359.4 420.0,359.4 432.5,356.2 442.5,351.2 455.0,352.0 465.0,353.8 475.0,356.2 490.0,355.0 500.0,350.0 510.0,343.8 520.0,341.2 530.0,340.5 540.0,337.0 550.0,332.5 560.0,330.3 580.0,330.3 580.0,330.3 595.0,330.3 605.0,333.8 615.0,342.5 625.0,350.0 635.0,352.0 645.0,348.8 655.0,345.0 667.5,339.5 680.0,338.8 692.5,339.5 700.0,345.0 710.0,352.0 720.0,355.0" fill="none" stroke="#87cefa" stroke-width="1" stroke-linejoin="round" shape-rendering="crispEdges" />
<polyline points="42.0,382.5 53.8,397.0 62.5,385.0 71.2,374.5 80.0,377.5 90.0,379.5 97.5,378.8 107.5,391.2 115.0,388.8 122.5,386.2 128.8,395.0 135.0,402.5 142.5,398.8 150.0,395.5 160.0,398.8 167.5,397.5 178.8,388.8 182.5,395.0 190.0,382.5 197.5,377.5 206.2,374.5 212.5,378.8 220.0,390.0 225.0,398.8 230.0,397.0 230.0,397.5 240.0,396.2 250.0,395.0 260.0,401.2 267.5,396.2 277.5,393.8 285.0,397.5 292.5,398.0 300.0,393.8 307.5,388.0 317.5,387.5 327.5,382.5 337.5,376.2 345.0,378.8 352.5,386.2 360.0,395.0 370.0,398.8 380.0,397.0 387.5,394.5 395.0,398.8 410.0,398.8 416.2,390.0 420.0,383.8 420.0,380.5 425.0,379.5 432.5,387.5 442.5,392.5 452.5,400.0 465.0,401.2 472.5,397.5 480.0,388.8 487.5,391.2 495.0,385.0 502.5,380.0 507.5,383.0 515.0,396.2 522.5,397.5 530.0,382.5 538.8,375.0 550.0,378.8 557.5,375.0 567.5,380.0 577.5,375.5 580.0,377.5 580.0,377.5 587.5,386.2 595.0,394.5 605.0,395.0 615.0,398.8 620.0,388.8 626.2,380.0 635.0,376.2 642.5,382.5 650.0,394.5 655.0,386.2 661.2,378.8 666.2,390.0 672.5,396.2 680.0,392.5 685.0,386.2 691.2,375.5 697.5,387.5 702.5,398.8 712.5,393.0 720.0,397.5" fill="none" stroke="#808000" stroke-width="1" stroke-linejoin="round" shape-rendering="crispEdges" />
<polyline points="45.5,383.5 57.2,398.0 66.0,386.0 74.8,375.5 83.5,378.5 93.5,380.5 101.0,379.8 111.0,392.2 118.5,389.8 126.0,387.2 132.2,396.0 138.5,403.5 146.0,399.8 153.5,396.5 163.5,399.8 171.0,398.5 182.2,389.8 186.0,396.0 193.5,383.5 201.0,378.5 209.8,375.5 216.0,379.8 223.5,391.0 228.5,399.8 233.5,398.0 233.5,398.5 243.5,397.2 253.5,396.0 263.5,402.2 271.0,397.2 281.0,394.8 288.5,398.5 296.0,399.0 303.5,394.8 311.0,389.0 321.0,388.5 331.0,383.5 341.0,377.2 348.5,379.8 356.0,387.2 363.5,396.0 373.5,399.8 383.5,398.0 391.0,395.5 398.5,399.8 413.5,399.8 419.8,391.0 423.5,384.8 423.5,381.5 428.5,380.5 436.0,388.5 446.0,393.5 456.0,401.0 468.5,402.2 476.0,398.5 483.5,389.8 491.0,392.2 498.5,386.0 506.0,381.0 511.0,384.0 518.5,397.2 526.0,398.5 533.5,383.5 542.2,376.0 553.5,379.8 561.0,376.0 571.0,381.0 581.0,376.5 583.5,378.5 583.5,378.5 591.0,387.2 598.5,395.5 608.5,396.0 618.5,399.8 623.5,389.8 629.8,381.0 638.5,377.2 646.0,383.5 653.5,395.5 658.5,387.2 664.8,379.8 669.8,391.0 676.0,397.2 683.5,393.5 688.5,387.2 694.8,376.5 701.0,388.5 706.0,399.8 716.0,394.0 723.5,398.5" fill="none" stroke="#008000" stroke-width="1" stroke-linejoin="round" shape-rendering="crispEdges" stroke-dasharray="3 4"/>
<polyline points="46.0,381.0 54.0,383.0 64.0,384.0 71.5,379.8 79.0,377.2 89.0,379.0 99.0,378.0 109.0,384.0 119.0,383.5 126.5,386.0 134.0,394.8 141.5,400.5 154.0,398.5 164.0,400.2 179.0,399.0 189.0,398.5 196.5,387.2 204.0,379.8 210.2,376.5 219.0,379.0 229.0,381.5 234.0,384.0 234.0,384.8 244.0,394.8 254.0,398.5 264.0,402.2 274.0,399.0 286.5,398.5 294.0,400.5 304.0,397.2 314.0,396.5 324.0,393.5 334.0,384.8 341.5,378.5 354.0,378.0 361.5,383.0 369.0,391.0 379.0,399.0 394.0,399.8 409.0,400.5 416.5,399.0 424.0,392.2 424.0,392.2 434.0,388.0 444.0,391.0 454.0,399.0 464.0,401.0 474.0,401.0 484.0,397.2 496.5,394.8 506.5,391.5 519.0,391.5 529.0,397.2 536.5,384.8 544.0,378.0 559.0,377.2 574.0,378.5 584.0,377.2 584.0,377.2 594.0,382.2 604.0,386.0 611.5,394.8 619.0,399.2 626.5,392.2 634.0,383.5 641.5,379.0 654.0,380.5 665.2,377.2 674.0,383.5 681.5,389.8 689.0,391.5 695.2,385.5 700.2,392.2 706.5,398.0 714.0,397.2 720.2,396.5 724.0,399.8" fill="none" stroke="#6fa8a8" stroke-width="0.9" stroke-linejoin="round" shape-rendering="crispEdges" />
<polyline points="42.0,380.0 50.0,382.0 60.0,383.0 67.5,378.8 75.0,376.2 85.0,378.0 95.0,377.0 105.0,383.0 115.0,382.5 122.5,385.0 130.0,393.8 137.5,399.5 150.0,397.5 160.0,399.2 175.0,398.0 185.0,397.5 192.5,386.2 200.0,378.8 206.2,375.5 215.0,378.0 225.0,380.5 230.0,383.0 230.0,383.8 240.0,393.8 250.0,397.5 260.0,401.2 270.0,398.0 282.5,397.5 290.0,399.5 300.0,396.2 310.0,395.5 320.0,392.5 330.0,383.8 337.5,377.5 350.0,377.0 357.5,382.0 365.0,390.0 375.0,398.0 390.0,398.8 405.0,399.5 412.5,398.0 420.0,391.2 420.0,391.2 430.0,387.0 440.0,390.0 450.0,398.0 460.0,400.0 470.0,400.0 480.0,396.2 492.5,393.8 502.5,390.5 515.0,390.5 525.0,396.2 532.5,383.8 540.0,377.0 555.0,376.2 570.0,377.5 580.0,376.2 580.0,376.2 590.0,381.2 600.0,385.0 607.5,393.8 615.0,398.2 622.5,391.2 630.0,382.5 637.5,378.0 650.0,379.5 661.2,376.2 670.0,382.5 677.5,388.8 685.0,390.5 691.2,384.5 696.2,391.2 702.5,397.0 710.0,396.2 716.2,395.5 720.0,398.8" fill="none" stroke="#98fb98" stroke-width="2.0" stroke-linejoin="round" shape-rendering="crispEdges" />
<polyline points="42.0,424.5 52.5,428.0 62.5,425.5 72.5,422.5 82.5,421.2 92.5,417.5 100.0,425.0 107.5,423.0 115.0,423.0 125.0,427.0 131.2,436.2 140.0,438.8 150.0,437.0 157.5,442.5 165.0,441.2 172.5,437.0 182.5,440.0 190.0,430.0 193.8,431.2 198.8,425.0 205.0,425.5 215.0,427.5 225.0,430.0 230.0,434.5 230.0,435.5 240.0,435.0 247.5,437.0 257.5,442.5 262.5,438.8 267.5,440.5 275.0,436.2 282.5,440.0 290.0,443.8 300.0,439.5 305.0,442.0 312.5,440.0 320.0,438.8 326.2,435.5 330.0,428.0 340.0,427.5 347.5,428.8 352.5,426.2 356.2,433.0 365.0,432.5 372.5,437.0 380.0,437.5 385.0,436.2 388.8,440.0 395.0,437.5 405.0,440.0 415.0,437.0 420.0,435.0 420.0,434.5 427.5,433.8 432.5,435.5 438.8,434.5 445.0,441.2 452.5,440.5 460.0,443.8 465.0,447.0 472.5,442.0 480.0,442.5 485.0,445.0 490.0,442.0 495.0,438.8 505.0,439.5 511.2,442.5 515.0,440.0 521.2,445.5 527.5,436.2 532.5,431.2 537.5,433.0 547.5,431.2 553.8,420.5 557.5,420.0 561.2,425.5 572.5,422.0 577.5,423.8 580.0,422.5 580.0,420.5 587.5,425.5 600.0,427.5 610.0,432.5 620.0,428.0 630.0,423.8 640.0,423.0 645.0,425.0 655.0,423.0 661.2,423.0 665.0,429.5 670.0,428.0 676.2,430.5 683.8,425.5 687.5,427.0 691.2,423.0 696.2,432.0 702.5,437.0 705.0,435.0 712.5,435.0 716.2,439.5 720.0,439.5" fill="none" stroke="#deb887" stroke-width="1.1" stroke-linejoin="round" shape-rendering="crispEdges" />
<polyline points="42.0,420.5 52.5,425.5 62.5,422.0 70.0,417.0 77.5,419.5 85.0,420.0 92.5,417.0 100.0,425.0 107.5,423.0 115.0,423.0 125.0,427.0 130.0,441.2 135.0,447.0 142.5,442.5 150.0,443.8 157.5,447.0 165.0,443.8 172.5,441.2 182.5,447.0 187.5,436.2 192.5,435.0 197.5,426.2 205.0,425.5 215.0,428.0 225.0,430.0 230.0,433.8 230.0,433.8 240.0,434.5 247.5,437.5 257.5,447.0 265.0,442.5 268.8,446.2 275.0,442.0 282.5,446.2 292.5,444.5 300.0,442.0 305.0,444.5 312.5,442.5 320.0,441.2 326.2,438.8 330.0,428.0 340.0,426.2 347.5,425.0 351.2,420.5 355.0,428.8 365.0,431.2 372.5,437.5 380.0,439.5 385.0,436.2 388.8,447.0 395.0,443.8 405.0,445.0 415.0,442.0 420.0,440.5 420.0,438.8 425.0,437.5 432.5,441.2 438.8,440.0 445.0,447.0 455.0,446.2 465.0,447.0 472.5,442.0 480.0,442.5 485.0,447.0 490.0,442.0 495.0,438.8 505.0,439.5 511.2,443.8 515.0,440.0 521.2,446.2 527.5,437.5 532.5,432.5 537.5,434.5 547.5,432.0 553.8,417.5 557.5,418.0 561.2,423.0 572.5,417.0 577.5,419.5 580.0,418.5 580.0,418.0 587.5,423.0 600.0,424.5 610.0,430.0 620.0,425.0 630.0,420.5 640.0,419.5 645.0,422.0 655.0,419.5 661.2,420.5 665.0,428.0 670.0,426.2 676.2,429.5 683.8,423.0 687.5,424.5 691.2,421.2 696.2,431.2 702.5,437.0 705.0,435.0 712.5,435.0 716.2,442.5 720.0,446.2" fill="none" stroke="#7fffd4" stroke-width="1.0" stroke-linejoin="round" shape-rendering="crispEdges" />
<polyline points="42.0,474.0 50.0,478.2 60.0,478.2 70.0,475.8 80.0,475.0 85.0,476.5 92.5,470.0 100.0,475.8 110.0,476.5 122.5,477.0 131.2,487.0 140.0,487.0 148.8,484.5 160.0,490.8 165.0,487.0 172.5,481.5 182.5,484.0 190.0,475.8 197.5,469.0 205.0,470.0 217.5,470.8 225.0,477.0 230.0,482.0 230.0,480.8 233.8,484.5 242.5,484.5 250.0,485.8 256.2,489.0 262.5,484.0 267.5,484.5 273.8,480.0 280.0,484.0 288.8,487.0 300.0,482.0 305.0,484.0 315.0,482.0 325.0,477.0 328.8,470.8 337.5,472.0 345.0,473.2 351.2,471.5 356.2,478.2 362.5,477.0 366.2,482.5 375.0,485.0 385.0,483.2 388.8,489.5 392.5,484.5 400.0,486.5 410.0,483.2 417.5,479.0 420.0,478.2 420.0,478.2 425.0,476.5 430.0,478.2 436.2,476.5 445.0,482.0 455.0,484.5 463.8,491.5 472.5,485.8 480.0,484.0 487.5,484.5 495.0,480.0 502.5,477.0 511.2,482.0 516.2,480.8 521.2,486.5 527.5,478.2 532.5,475.0 537.5,477.0 547.5,475.8 552.5,468.2 557.0,463.2 561.2,469.0 570.0,469.5 573.8,467.5 577.5,471.5 580.0,469.5 580.0,467.5 585.0,469.5 592.5,477.0 598.8,477.0 605.0,480.8 610.0,484.5 615.0,482.5 622.5,478.2 630.0,474.5 640.0,474.0 647.5,472.5 655.0,474.0 661.2,475.8 665.0,480.0 675.0,480.8 682.5,478.2 690.0,477.5 696.2,481.5 702.5,483.2 711.2,481.5 716.2,485.0 720.0,484.5" fill="none" stroke="#7fffd4" stroke-width="1.0" stroke-linejoin="round" shape-rendering="crispEdges" />
<polyline points="44.5,474.8 52.5,479.1 62.5,479.1 72.5,476.6 82.5,475.8 87.5,477.3 95.0,470.8 102.5,476.6 112.5,477.3 125.0,477.8 133.8,487.8 142.5,487.8 151.2,485.3 162.5,491.6 167.5,487.8 175.0,482.3 185.0,484.8 192.5,476.6 200.0,469.8 207.5,470.8 220.0,471.6 227.5,477.8 232.5,482.8 232.5,481.6 236.2,485.3 245.0,485.3 252.5,486.6 258.8,489.8 265.0,484.8 270.0,485.3 276.2,480.8 282.5,484.8 291.2,487.8 302.5,482.8 307.5,484.8 317.5,482.8 327.5,477.8 331.2,471.6 340.0,472.8 347.5,474.1 353.8,472.3 358.8,479.1 365.0,477.8 368.8,483.3 377.5,485.8 387.5,484.1 391.2,490.3 395.0,485.3 402.5,487.3 412.5,484.1 420.0,479.8 422.5,479.1 422.5,479.1 427.5,477.3 432.5,479.1 438.8,477.3 447.5,482.8 457.5,485.3 466.2,492.3 475.0,486.6 482.5,484.8 490.0,485.3 497.5,480.8 505.0,477.8 513.8,482.8 518.8,481.6 523.8,487.3 530.0,479.1 535.0,475.8 540.0,477.8 550.0,476.6 555.0,469.1 559.5,464.1 563.8,469.8 572.5,470.3 576.2,468.3 580.0,472.3 582.5,470.3 582.5,468.3 587.5,470.3 595.0,477.8 601.2,477.8 607.5,481.6 612.5,485.3 617.5,483.3 625.0,479.1 632.5,475.3 642.5,474.8 650.0,473.3 657.5,474.8 663.8,476.6 667.5,480.8 677.5,481.6 685.0,479.1 692.5,478.3 698.8,482.3 705.0,484.1 713.8,482.3 718.8,485.8 722.5,485.3" fill="none" stroke="#7fffd4" stroke-width="0.9" stroke-linejoin="round" shape-rendering="crispEdges" />
<g shape-rendering="crispEdges">
<rect x="45" y="515" width="1" height="5" fill="#00ff00"/>
<rect x="45" y="562" width="1" height="2" fill="#00ff00"/>
<rect x="49" y="516" width="1" height="4" fill="#00ff00"/>
<rect x="49" y="562" width="1" height="3" fill="#00ff00"/>
<rect x="52" y="516" width="1" height="4" fill="#00ff00"/>
<rect x="52" y="562" width="1" height="4" fill="#00ff00"/>
<rect x="56" y="516" width="1" height="4" fill="#00ff00"/>
<rect x="56" y="562" width="1" height="4" fill="#00ff00"/>
<rect x="60" y="515" width="1" height="5" fill="#00ff00"/>
<rect x="60" y="562" width="1" height="4" fill="#00ff00"/>
<rect x="63" y="514" width="1" height="6" fill="#00ff00"/>
<rect x="63" y="562" width="1" height="3" fill="#00ff00"/>
<rect x="67" y="513" width="1" height="7" fill="#00ff00"/>
<rect x="67" y="562" width="1" height="1" fill="#00ff00"/>
<rect x="71" y="512" width="1" height="8" fill="#00ff00"/>
<rect x="71" y="562" width="1" height="1" fill="#00ff00"/>
<rect x="74" y="512" width="1" height="8" fill="#00ff00"/>
<rect x="74" y="562" width="1" height="1" fill="#00ff00"/>
<rect x="78" y="511" width="1" height="9" fill="#00ff00"/>
<rect x="78" y="562" width="1" height="1" fill="#00ff00"/>
<rect x="82" y="512" width="1" height="8" fill="#00ff00"/>
<rect x="82" y="562" width="1" height="1" fill="#00ff00"/>
<rect x="85" y="513" width="1" height="7" fill="#00ff00"/>
<rect x="85" y="562" width="1" height="1" fill="#00ff00"/>
<rect x="89" y="511" width="1" height="9" fill="#00ff00"/>
<rect x="89" y="561" width="1" height="2" fill="#00ff00"/>
<rect x="93" y="510" width="1" height="10" fill="#00ff00"/>
<rect x="93" y="559" width="1" height="4" fill="#00ff00"/>
<rect x="96" y="510" width="1" height="10" fill="#00ff00"/>
<rect x="96" y="559" width="1" height="4" fill="#00ff00"/>
<rect x="100" y="511" width="1" height="9" fill="#00ff00"/>
<rect x="100" y="562" width="1" height="1" fill="#00ff00"/>
<rect x="104" y="512" width="1" height="8" fill="#00ff00"/>
<rect x="104" y="562" width="1" height="1" fill="#00ff00"/>
<rect x="107" y="512" width="1" height="8" fill="#00ff00"/>
<rect x="107" y="562" width="1" height="1" fill="#00ff00"/>
<rect x="111" y="513" width="1" height="7" fill="#00ff00"/>
<rect x="111" y="562" width="1" height="1" fill="#00ff00"/>
<rect x="115" y="514" width="1" height="6" fill="#00ff00"/>
<rect x="115" y="562" width="1" height="1" fill="#00ff00"/>
<rect x="119" y="514" width="1" height="6" fill="#00ff00"/>
<rect x="119" y="562" width="1" height="1" fill="#00ff00"/>
<rect x="122" y="515" width="1" height="5" fill="#00ff00"/>
<rect x="122" y="562" width="1" height="2" fill="#00ff00"/>
<rect x="126" y="516" width="1" height="4" fill="#00ff00"/>
<rect x="126" y="562" width="1" height="4" fill="#00ff00"/>
<rect x="130" y="518" width="1" height="2" fill="#00ff00"/>
<rect x="130" y="562" width="1" height="9" fill="#00ff00"/>
<rect x="133" y="519" width="1" height="1" fill="#ff0000"/>
<rect x="133" y="562" width="1" height="11" fill="#00ff00"/>
<rect x="137" y="519" width="1" height="2" fill="#ff0000"/>
<rect x="137" y="562" width="1" height="12" fill="#00ff00"/>
<rect x="141" y="519" width="1" height="3" fill="#ff0000"/>
<rect x="141" y="562" width="1" height="13" fill="#00ff00"/>
<rect x="144" y="519" width="1" height="4" fill="#ff0000"/>
<rect x="144" y="562" width="1" height="13" fill="#00ff00"/>
<rect x="148" y="519" width="1" height="4" fill="#ff0000"/>
<rect x="148" y="562" width="1" height="11" fill="#00ff00"/>
<rect x="152" y="519" width="1" height="5" fill="#ff0000"/>
<rect x="152" y="562" width="1" height="12" fill="#00ff00"/>
<rect x="155" y="519" width="1" height="6" fill="#ff0000"/>
<rect x="155" y="562" width="1" height="13" fill="#00ff00"/>
<rect x="159" y="519" width="1" height="8" fill="#ff0000"/>
<rect x="159" y="562" width="1" height="14" fill="#00ff00"/>
<rect x="163" y="519" width="1" height="9" fill="#ff0000"/>
<rect x="163" y="562" width="1" height="13" fill="#00ff00"/>
<rect x="166" y="519" width="1" height="9" fill="#ff0000"/>
<rect x="166" y="562" width="1" height="11" fill="#00ff00"/>
<rect x="170" y="519" width="1" height="9" fill="#ff0000"/>
<rect x="170" y="562" width="1" height="10" fill="#00ff00"/>
<rect x="174" y="519" width="1" height="9" fill="#ff0000"/>
<rect x="174" y="562" width="1" height="8" fill="#00ff00"/>
<rect x="177" y="519" width="1" height="9" fill="#ff0000"/>
<rect x="177" y="562" width="1" height="8" fill="#00ff00"/>
<rect x="181" y="519" width="1" height="9" fill="#ff0000"/>
<rect x="181" y="562" width="1" height="7" fill="#00ff00"/>
<rect x="185" y="519" width="1" height="7" fill="#ff0000"/>
<rect x="185" y="562" width="1" height="4" fill="#00ff00"/>
<rect x="188" y="519" width="1" height="4" fill="#ff0000"/>
<rect x="188" y="562" width="1" height="2" fill="#00ff00"/>
<rect x="192" y="519" width="1" height="2" fill="#ff0000"/>
<rect x="192" y="561" width="1" height="2" fill="#00ff00"/>
<rect x="196" y="519" width="1" height="1" fill="#00ff00"/>
<rect x="196" y="556" width="1" height="7" fill="#00ff00"/>
<rect x="199" y="518" width="1" height="2" fill="#00ff00"/>
<rect x="199" y="554" width="1" height="9" fill="#00ff00"/>
<rect x="203" y="518" width="1" height="2" fill="#00ff00"/>
<rect x="203" y="552" width="1" height="11" fill="#00ff00"/>
<rect x="207" y="518" width="1" height="2" fill="#00ff00"/>
<rect x="207" y="551" width="1" height="12" fill="#00ff00"/>
<rect x="211" y="518" width="1" height="2" fill="#00ff00"/>
<rect x="211" y="553" width="1" height="10" fill="#00ff00"/>
<rect x="214" y="519" width="1" height="1" fill="#00ff00"/>
<rect x="214" y="554" width="1" height="9" fill="#00ff00"/>
<rect x="218" y="519" width="1" height="1" fill="#00ff00"/>
<rect x="218" y="555" width="1" height="8" fill="#00ff00"/>
<rect x="222" y="519" width="1" height="1" fill="#ff0000"/>
<rect x="222" y="556" width="1" height="7" fill="#00ff00"/>
<rect x="225" y="519" width="1" height="3" fill="#ff0000"/>
<rect x="225" y="558" width="1" height="5" fill="#00ff00"/>
<rect x="229" y="519" width="1" height="4" fill="#ff0000"/>
<rect x="229" y="562" width="1" height="1" fill="#00ff00"/>
<rect x="233" y="519" width="1" height="5" fill="#ff0000"/>
<rect x="233" y="562" width="1" height="3" fill="#00ff00"/>
<rect x="236" y="519" width="1" height="5" fill="#ff0000"/>
<rect x="236" y="562" width="1" height="4" fill="#00ff00"/>
<rect x="240" y="519" width="1" height="6" fill="#ff0000"/>
<rect x="240" y="562" width="1" height="3" fill="#00ff00"/>
<rect x="244" y="519" width="1" height="6" fill="#ff0000"/>
<rect x="244" y="562" width="1" height="5" fill="#00ff00"/>
<rect x="247" y="519" width="1" height="6" fill="#ff0000"/>
<rect x="247" y="562" width="1" height="6" fill="#00ff00"/>
<rect x="251" y="519" width="1" height="8" fill="#ff0000"/>
<rect x="251" y="562" width="1" height="7" fill="#00ff00"/>
<rect x="255" y="519" width="1" height="10" fill="#ff0000"/>
<rect x="255" y="562" width="1" height="9" fill="#00ff00"/>
<rect x="258" y="519" width="1" height="10" fill="#ff0000"/>
<rect x="258" y="562" width="1" height="9" fill="#00ff00"/>
<rect x="262" y="519" width="1" height="10" fill="#ff0000"/>
<rect x="262" y="562" width="1" height="8" fill="#00ff00"/>
<rect x="266" y="519" width="1" height="10" fill="#ff0000"/>
<rect x="266" y="562" width="1" height="7" fill="#00ff00"/>
<rect x="269" y="519" width="1" height="10" fill="#ff0000"/>
<rect x="269" y="562" width="1" height="6" fill="#00ff00"/>
<rect x="273" y="519" width="1" height="10" fill="#ff0000"/>
<rect x="273" y="562" width="1" height="5" fill="#00ff00"/>
<rect x="277" y="519" width="1" height="10" fill="#ff0000"/>
<rect x="277" y="562" width="1" height="5" fill="#00ff00"/>
<rect x="280" y="519" width="1" height="10" fill="#ff0000"/>
<rect x="280" y="562" width="1" height="5" fill="#00ff00"/>
<rect x="284" y="519" width="1" height="12" fill="#ff0000"/>
<rect x="284" y="562" width="1" height="6" fill="#00ff00"/>
<rect x="288" y="519" width="1" height="14" fill="#ff0000"/>
<rect x="288" y="562" width="1" height="7" fill="#00ff00"/>
<rect x="291" y="519" width="1" height="14" fill="#ff0000"/>
<rect x="291" y="562" width="1" height="7" fill="#00ff00"/>
<rect x="295" y="519" width="1" height="13" fill="#ff0000"/>
<rect x="295" y="562" width="1" height="6" fill="#00ff00"/>
<rect x="299" y="519" width="1" height="12" fill="#ff0000"/>
<rect x="299" y="562" width="1" height="5" fill="#00ff00"/>
<rect x="303" y="519" width="1" height="11" fill="#ff0000"/>
<rect x="303" y="562" width="1" height="4" fill="#00ff00"/>
<rect x="306" y="519" width="1" height="10" fill="#ff0000"/>
<rect x="306" y="562" width="1" height="3" fill="#00ff00"/>
<rect x="310" y="519" width="1" height="9" fill="#ff0000"/>
<rect x="310" y="562" width="1" height="2" fill="#00ff00"/>
<rect x="314" y="519" width="1" height="8" fill="#ff0000"/>
<rect x="314" y="562" width="1" height="1" fill="#00ff00"/>
<rect x="317" y="519" width="1" height="7" fill="#ff0000"/>
<rect x="317" y="562" width="1" height="1" fill="#00ff00"/>
<rect x="321" y="519" width="1" height="5" fill="#ff0000"/>
<rect x="321" y="561" width="1" height="2" fill="#00ff00"/>
<rect x="325" y="519" width="1" height="4" fill="#ff0000"/>
<rect x="325" y="559" width="1" height="4" fill="#00ff00"/>
<rect x="328" y="519" width="1" height="3" fill="#ff0000"/>
<rect x="328" y="556" width="1" height="7" fill="#00ff00"/>
<rect x="332" y="519" width="1" height="1" fill="#ff0000"/>
<rect x="332" y="555" width="1" height="8" fill="#00ff00"/>
<rect x="336" y="519" width="1" height="1" fill="#00ff00"/>
<rect x="336" y="553" width="1" height="10" fill="#00ff00"/>
<rect x="339" y="519" width="1" height="1" fill="#00ff00"/>
<rect x="339" y="553" width="1" height="10" fill="#00ff00"/>
<rect x="343" y="518" width="1" height="2" fill="#00ff00"/>
<rect x="343" y="553" width="1" height="10" fill="#00ff00"/>
<rect x="347" y="517" width="1" height="3" fill="#00ff00"/>
<rect x="347" y="553" width="1" height="10" fill="#00ff00"/>
<rect x="350" y="516" width="1" height="4" fill="#00ff00"/>
<rect x="350" y="553" width="1" height="10" fill="#00ff00"/>
<rect x="354" y="518" width="1" height="2" fill="#00ff00"/>
<rect x="354" y="556" width="1" height="7" fill="#00ff00"/>
<rect x="358" y="519" width="1" height="1" fill="#ff0000"/>
<rect x="358" y="559" width="1" height="4" fill="#00ff00"/>
<rect x="361" y="519" width="1" height="2" fill="#ff0000"/>
<rect x="361" y="560" width="1" height="3" fill="#00ff00"/>
<rect x="365" y="519" width="1" height="4" fill="#ff0000"/>
<rect x="365" y="562" width="1" height="1" fill="#00ff00"/>
<rect x="369" y="519" width="1" height="5" fill="#ff0000"/>
<rect x="369" y="562" width="1" height="1" fill="#00ff00"/>
<rect x="372" y="519" width="1" height="6" fill="#ff0000"/>
<rect x="372" y="562" width="1" height="3" fill="#00ff00"/>
<rect x="376" y="519" width="1" height="7" fill="#ff0000"/>
<rect x="376" y="562" width="1" height="4" fill="#00ff00"/>
<rect x="380" y="519" width="1" height="8" fill="#ff0000"/>
<rect x="380" y="562" width="1" height="4" fill="#00ff00"/>
<rect x="383" y="519" width="1" height="8" fill="#ff0000"/>
<rect x="383" y="562" width="1" height="5" fill="#00ff00"/>
<rect x="387" y="519" width="1" height="9" fill="#ff0000"/>
<rect x="387" y="562" width="1" height="6" fill="#00ff00"/>
<rect x="391" y="519" width="1" height="10" fill="#ff0000"/>
<rect x="391" y="562" width="1" height="6" fill="#00ff00"/>
<rect x="395" y="519" width="1" height="11" fill="#ff0000"/>
<rect x="395" y="562" width="1" height="7" fill="#00ff00"/>
<rect x="398" y="519" width="1" height="11" fill="#ff0000"/>
<rect x="398" y="562" width="1" height="8" fill="#00ff00"/>
<rect x="402" y="519" width="1" height="11" fill="#ff0000"/>
<rect x="402" y="562" width="1" height="8" fill="#00ff00"/>
<rect x="406" y="519" width="1" height="11" fill="#ff0000"/>
<rect x="406" y="562" width="1" height="7" fill="#00ff00"/>
<rect x="409" y="519" width="1" height="11" fill="#ff0000"/>
<rect x="409" y="562" width="1" height="6" fill="#00ff00"/>
<rect x="413" y="519" width="1" height="9" fill="#ff0000"/>
<rect x="413" y="562" width="1" height="4" fill="#00ff00"/>
<rect x="417" y="519" width="1" height="7" fill="#ff0000"/>
<rect x="417" y="562" width="1" height="2" fill="#00ff00"/>
<rect x="420" y="519" width="1" height="5" fill="#ff0000"/>
<rect x="420" y="562" width="1" height="1" fill="#00ff00"/>
<rect x="424" y="519" width="1" height="3" fill="#ff0000"/>
<rect x="424" y="561" width="1" height="2" fill="#00ff00"/>
<rect x="428" y="519" width="1" height="2" fill="#ff0000"/>
<rect x="428" y="559" width="1" height="4" fill="#00ff00"/>
<rect x="431" y="519" width="1" height="2" fill="#ff0000"/>
<rect x="431" y="560" width="1" height="3" fill="#00ff00"/>
<rect x="435" y="519" width="1" height="2" fill="#ff0000"/>
<rect x="435" y="559" width="1" height="4" fill="#00ff00"/>
<rect x="439" y="519" width="1" height="2" fill="#ff0000"/>
<rect x="439" y="561" width="1" height="2" fill="#00ff00"/>
<rect x="442" y="519" width="1" height="3" fill="#ff0000"/>
<rect x="442" y="562" width="1" height="1" fill="#00ff00"/>
<rect x="446" y="519" width="1" height="6" fill="#ff0000"/>
<rect x="446" y="562" width="1" height="1" fill="#00ff00"/>
<rect x="450" y="519" width="1" height="7" fill="#ff0000"/>
<rect x="450" y="562" width="1" height="2" fill="#00ff00"/>
<rect x="453" y="519" width="1" height="8" fill="#ff0000"/>
<rect x="453" y="562" width="1" height="4" fill="#00ff00"/>
<rect x="457" y="519" width="1" height="10" fill="#ff0000"/>
<rect x="457" y="562" width="1" height="4" fill="#00ff00"/>
<rect x="461" y="519" width="1" height="10" fill="#ff0000"/>
<rect x="461" y="562" width="1" height="7" fill="#00ff00"/>
<rect x="464" y="519" width="1" height="12" fill="#ff0000"/>
<rect x="464" y="562" width="1" height="9" fill="#00ff00"/>
<rect x="468" y="519" width="1" height="11" fill="#ff0000"/>
<rect x="468" y="562" width="1" height="9" fill="#00ff00"/>
<rect x="472" y="519" width="1" height="10" fill="#ff0000"/>
<rect x="472" y="562" width="1" height="6" fill="#00ff00"/>
<rect x="475" y="519" width="1" height="9" fill="#ff0000"/>
<rect x="475" y="562" width="1" height="5" fill="#00ff00"/>
<rect x="479" y="519" width="1" height="9" fill="#ff0000"/>
<rect x="479" y="562" width="1" height="5" fill="#00ff00"/>
<rect x="483" y="519" width="1" height="9" fill="#ff0000"/>
<rect x="483" y="562" width="1" height="4" fill="#00ff00"/>
<rect x="487" y="519" width="1" height="8" fill="#ff0000"/>
<rect x="487" y="562" width="1" height="3" fill="#00ff00"/>
<rect x="490" y="519" width="1" height="7" fill="#ff0000"/>
<rect x="490" y="562" width="1" height="2" fill="#00ff00"/>
<rect x="494" y="519" width="1" height="5" fill="#ff0000"/>
<rect x="494" y="562" width="1" height="1" fill="#00ff00"/>
<rect x="498" y="519" width="1" height="4" fill="#ff0000"/>
<rect x="498" y="562" width="1" height="1" fill="#00ff00"/>
<rect x="501" y="519" width="1" height="4" fill="#ff0000"/>
<rect x="501" y="561" width="1" height="2" fill="#00ff00"/>
<rect x="505" y="519" width="1" height="4" fill="#ff0000"/>
<rect x="505" y="561" width="1" height="2" fill="#00ff00"/>
<rect x="509" y="519" width="1" height="5" fill="#ff0000"/>
<rect x="509" y="561" width="1" height="2" fill="#00ff00"/>
<rect x="512" y="519" width="1" height="6" fill="#ff0000"/>
<rect x="512" y="561" width="1" height="2" fill="#00ff00"/>
<rect x="516" y="519" width="1" height="7" fill="#ff0000"/>
<rect x="516" y="561" width="1" height="2" fill="#00ff00"/>
<rect x="520" y="519" width="1" height="8" fill="#ff0000"/>
<rect x="520" y="562" width="1" height="1" fill="#00ff00"/>
<rect x="523" y="519" width="1" height="9" fill="#ff0000"/>
<rect x="523" y="562" width="1" height="1" fill="#00ff00"/>
<rect x="527" y="519" width="1" height="8" fill="#ff0000"/>
<rect x="527" y="562" width="1" height="1" fill="#00ff00"/>
<rect x="531" y="519" width="1" height="5" fill="#ff0000"/>
<rect x="531" y="559" width="1" height="4" fill="#00ff00"/>
<rect x="534" y="519" width="1" height="4" fill="#ff0000"/>
<rect x="534" y="558" width="1" height="5" fill="#00ff00"/>
<rect x="538" y="519" width="1" height="3" fill="#ff0000"/>
<rect x="538" y="557" width="1" height="6" fill="#00ff00"/>
<rect x="542" y="519" width="1" height="2" fill="#ff0000"/>
<rect x="542" y="555" width="1" height="8" fill="#00ff00"/>
<rect x="545" y="519" width="1" height="2" fill="#ff0000"/>
<rect x="545" y="555" width="1" height="8" fill="#00ff00"/>
<rect x="549" y="519" width="1" height="1" fill="#ff0000"/>
<rect x="549" y="554" width="1" height="9" fill="#00ff00"/>
<rect x="553" y="515" width="1" height="5" fill="#00ff00"/>
<rect x="553" y="551" width="1" height="12" fill="#00ff00"/>
<rect x="556" y="513" width="1" height="7" fill="#00ff00"/>
<rect x="556" y="548" width="1" height="15" fill="#00ff00"/>
<rect x="560" y="512" width="1" height="8" fill="#00ff00"/>
<rect x="560" y="548" width="1" height="15" fill="#00ff00"/>
<rect x="564" y="510" width="1" height="10" fill="#00ff00"/>
<rect x="564" y="549" width="1" height="14" fill="#00ff00"/>
<rect x="567" y="509" width="1" height="11" fill="#00ff00"/>
<rect x="567" y="549" width="1" height="14" fill="#00ff00"/>
<rect x="571" y="508" width="1" height="12" fill="#00ff00"/>
<rect x="571" y="549" width="1" height="14" fill="#00ff00"/>
<rect x="575" y="508" width="1" height="12" fill="#00ff00"/>
<rect x="575" y="550" width="1" height="13" fill="#00ff00"/>
<rect x="579" y="506" width="1" height="14" fill="#00ff00"/>
<rect x="579" y="551" width="1" height="12" fill="#00ff00"/>
<rect x="582" y="508" width="1" height="12" fill="#00ff00"/>
<rect x="582" y="551" width="1" height="12" fill="#00ff00"/>
<rect x="586" y="510" width="1" height="10" fill="#00ff00"/>
<rect x="586" y="554" width="1" height="9" fill="#00ff00"/>
<rect x="590" y="511" width="1" height="9" fill="#00ff00"/>
<rect x="590" y="555" width="1" height="8" fill="#00ff00"/>
<rect x="593" y="513" width="1" height="7" fill="#00ff00"/>
<rect x="593" y="557" width="1" height="6" fill="#00ff00"/>
<rect x="597" y="514" width="1" height="6" fill="#00ff00"/>
<rect x="597" y="559" width="1" height="4" fill="#00ff00"/>
<rect x="601" y="516" width="1" height="4" fill="#00ff00"/>
<rect x="601" y="562" width="1" height="1" fill="#00ff00"/>
<rect x="604" y="517" width="1" height="3" fill="#00ff00"/>
<rect x="604" y="562" width="1" height="2" fill="#00ff00"/>
<rect x="608" y="519" width="1" height="1" fill="#00ff00"/>
<rect x="608" y="562" width="1" height="4" fill="#00ff00"/>
<rect x="612" y="519" width="1" height="1" fill="#ff0000"/>
<rect x="612" y="562" width="1" height="6" fill="#00ff00"/>
<rect x="615" y="519" width="1" height="1" fill="#ff0000"/>
<rect x="615" y="562" width="1" height="6" fill="#00ff00"/>
<rect x="619" y="519" width="1" height="1" fill="#00ff00"/>
<rect x="619" y="562" width="1" height="4" fill="#00ff00"/>
<rect x="623" y="518" width="1" height="2" fill="#00ff00"/>
<rect x="623" y="562" width="1" height="2" fill="#00ff00"/>
<rect x="626" y="516" width="1" height="4" fill="#00ff00"/>
<rect x="626" y="562" width="1" height="1" fill="#00ff00"/>
<rect x="630" y="515" width="1" height="5" fill="#00ff00"/>
<rect x="630" y="562" width="1" height="1" fill="#00ff00"/>
<rect x="634" y="513" width="1" height="7" fill="#00ff00"/>
<rect x="634" y="561" width="1" height="2" fill="#00ff00"/>
<rect x="637" y="514" width="1" height="6" fill="#00ff00"/>
<rect x="637" y="561" width="1" height="2" fill="#00ff00"/>
<rect x="641" y="514" width="1" height="6" fill="#00ff00"/>
<rect x="641" y="561" width="1" height="2" fill="#00ff00"/>
<rect x="645" y="515" width="1" height="5" fill="#00ff00"/>
<rect x="645" y="562" width="1" height="1" fill="#00ff00"/>
<rect x="648" y="515" width="1" height="5" fill="#00ff00"/>
<rect x="648" y="562" width="1" height="1" fill="#00ff00"/>
<rect x="652" y="515" width="1" height="5" fill="#00ff00"/>
<rect x="652" y="562" width="1" height="1" fill="#00ff00"/>
<rect x="656" y="515" width="1" height="5" fill="#00ff00"/>
<rect x="656" y="562" width="1" height="1" fill="#00ff00"/>
<rect x="659" y="514" width="1" height="6" fill="#00ff00"/>
<rect x="659" y="562" width="1" height="1" fill="#00ff00"/>
<rect x="663" y="515" width="1" height="5" fill="#00ff00"/>
<rect x="663" y="562" width="1" height="1" fill="#00ff00"/>
<rect x="667" y="516" width="1" height="4" fill="#00ff00"/>
<rect x="667" y="562" width="1" height="2" fill="#00ff00"/>
<rect x="671" y="518" width="1" height="2" fill="#00ff00"/>
<rect x="671" y="562" width="1" height="3" fill="#00ff00"/>
<rect x="674" y="518" width="1" height="2" fill="#00ff00"/>
<rect x="674" y="562" width="1" height="3" fill="#00ff00"/>
<rect x="678" y="519" width="1" height="1" fill="#00ff00"/>
<rect x="678" y="562" width="1" height="3" fill="#00ff00"/>
<rect x="682" y="518" width="1" height="2" fill="#00ff00"/>
<rect x="682" y="562" width="1" height="3" fill="#00ff00"/>
<rect x="685" y="518" width="1" height="2" fill="#00ff00"/>
<rect x="685" y="562" width="1" height="3" fill="#00ff00"/>
<rect x="689" y="518" width="1" height="2" fill="#00ff00"/>
<rect x="689" y="562" width="1" height="2" fill="#00ff00"/>
<rect x="693" y="519" width="1" height="1" fill="#00ff00"/>
<rect x="693" y="562" width="1" height="3" fill="#00ff00"/>
<rect x="696" y="519" width="1" height="1" fill="#ff0000"/>
<rect x="696" y="562" width="1" height="4" fill="#00ff00"/>
<rect x="700" y="519" width="1" height="3" fill="#ff0000"/>
<rect x="700" y="562" width="1" height="6" fill="#00ff00"/>
<rect x="704" y="519" width="1" height="4" fill="#ff0000"/>
<rect x="704" y="562" width="1" height="6" fill="#00ff00"/>
<rect x="707" y="519" width="1" height="4" fill="#ff0000"/>
<rect x="707" y="562" width="1" height="7" fill="#00ff00"/>
<rect x="711" y="519" width="1" height="5" fill="#ff0000"/>
<rect x="711" y="562" width="1" height="7" fill="#00ff00"/>
<rect x="715" y="519" width="1" height="5" fill="#ff0000"/>
<rect x="715" y="562" width="1" height="7" fill="#00ff00"/>
<rect x="718" y="519" width="1" height="6" fill="#ff0000"/>
<rect x="718" y="562" width="1" height="8" fill="#00ff00"/>
</g>
<g shape-rendering="crispEdges">
<rect x="64" y="584" width="1" height="5" fill="#000"/>
<text class="ax" transform="translate(66.5 597) scale(0.868 1)">4</text>
<rect x="97" y="584" width="1" height="5" fill="#000"/>
<text class="ax" transform="translate(99.5 597) scale(0.868 1)">5</text>
<rect x="131" y="584" width="1" height="5" fill="#000"/>
<text class="ax" transform="translate(133.5 597) scale(0.868 1)">6</text>
<rect x="164" y="584" width="1" height="5" fill="#000"/>
<text class="ax" transform="translate(166.5 597) scale(0.868 1)">7</text>
<rect x="197" y="584" width="1" height="5" fill="#000"/>
<text class="ax" transform="translate(199.5 597) scale(0.868 1)">10</text>
<rect x="230" y="584" width="1" height="5" fill="#000"/>
<text class="ax" transform="translate(232.5 597) scale(0.868 1)">11</text>
<rect x="263" y="584" width="1" height="5" fill="#000"/>
<text class="ax" transform="translate(265.5 597) scale(0.868 1)">12</text>
<rect x="296" y="584" width="1" height="5" fill="#000"/>
<text class="ax" transform="translate(298.5 597) scale(0.868 1)">13</text>
<rect x="329" y="584" width="1" height="5" fill="#000"/>
<text class="ax" transform="translate(331.5 597) scale(0.868 1)">14</text>
<rect x="362" y="584" width="1" height="5" fill="#000"/>
<text class="ax" transform="translate(364.5 597) scale(0.868 1)">17</text>
<rect x="396" y="584" width="1" height="5" fill="#000"/>
<text class="ax" transform="translate(398.5 597) scale(0.868 1)">18</text>
<rect x="429" y="584" width="1" height="5" fill="#000"/>
<text class="ax" transform="translate(431.5 597) scale(0.868 1)">19</text>
<rect x="462" y="584" width="1" height="5" fill="#000"/>
<text class="ax" transform="translate(464.5 597) scale(0.868 1)">20</text>
<rect x="495" y="584" width="1" height="5" fill="#000"/>
<text class="ax" transform="translate(497.5 597) scale(0.868 1)">21</text>
<rect x="528" y="584" width="1" height="5" fill="#000"/>
<text class="ax" transform="translate(530.5 597) scale(0.868 1)">24</text>
<rect x="561" y="584" width="1" height="5" fill="#000"/>
<text class="ax" transform="translate(563.5 597) scale(0.868 1)">25</text>
<rect x="594" y="584" width="1" height="5" fill="#000"/>
<text class="ax" transform="translate(596.5 597) scale(0.868 1)">26</text>
<rect x="627" y="584" width="1" height="5" fill="#000"/>
<text class="ax" transform="translate(629.5 597) scale(0.868 1)">27</text>
<rect x="660" y="584" width="1" height="5" fill="#000"/>
<text class="ax" transform="translate(662.5 597) scale(0.868 1)">28</text>
<rect x="694" y="584" width="1" height="5" fill="#000"/>
<text class="ax" transform="translate(696.5 597) scale(0.868 1)">Dez</text>
<rect x="745" y="584" width="1" height="5" fill="#000"/><text class="ax" transform="translate(747.5 597) scale(0.868 1)">2</text>
</g>
</svg></body></html>
